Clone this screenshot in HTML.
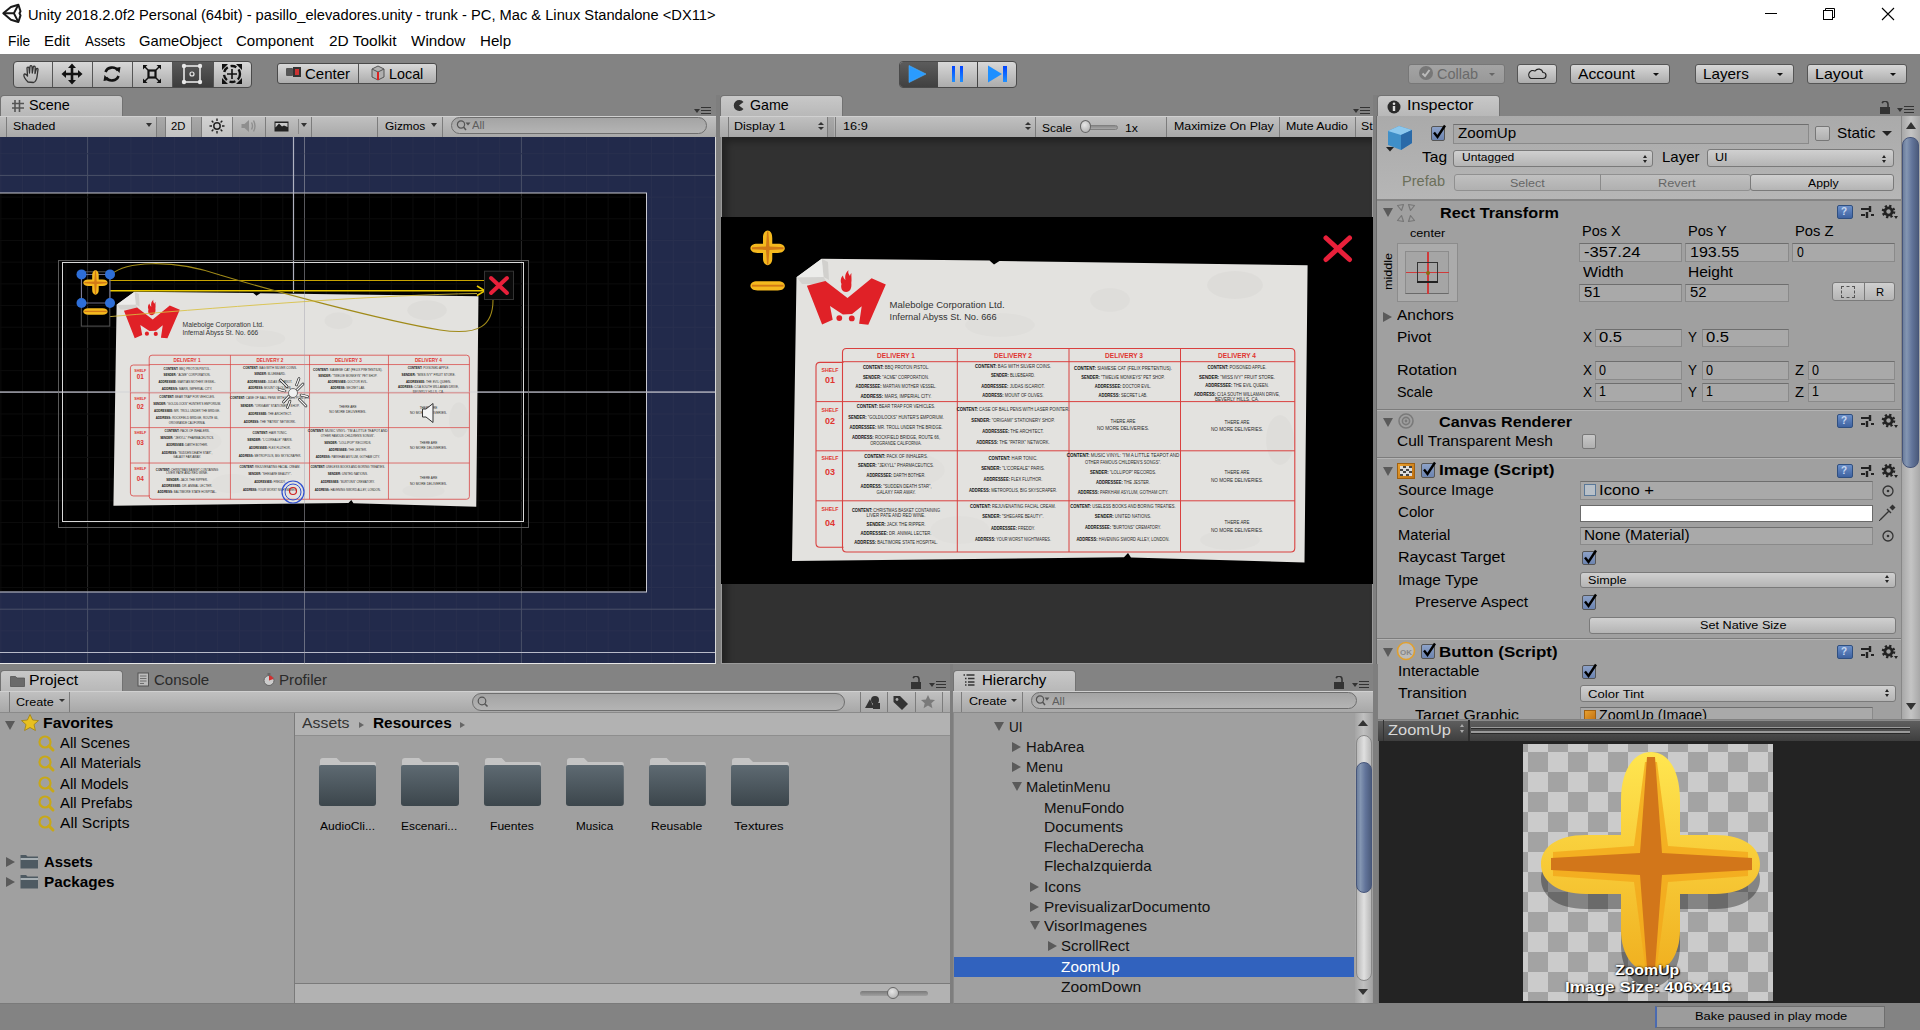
<!DOCTYPE html><html><head><meta charset="utf-8"><style>
*{margin:0;padding:0;box-sizing:border-box}
html,body{width:1920px;height:1030px;overflow:hidden;background:#838383;font-family:"Liberation Sans", sans-serif;position:relative}
.t{position:absolute;line-height:0;white-space:pre}
.ts{display:inline-block;transform-origin:0 0}
</style></head><body>
<div style="position:absolute;left:0px;top:0px;width:1920px;height:54px;background:#fff"></div>
<svg style="position:absolute;left:0px;top:0px" width="24" height="26" viewBox="0 0 24 26">
<path d="M3.3 13.3 L10.9 7 L18.4 4.7 L20.5 11.3 L19.5 13.3 L20.5 15.4 L18.4 22 L10.9 19.7 Z" fill="none" stroke="#1a1a1a" stroke-width="2" stroke-linejoin="round"/>
<path d="M3.3 13.3 H13.9 L18.2 5 M13.9 13.3 L18.2 21.7" stroke="#1a1a1a" stroke-width="1.9" fill="none"/>
</svg>
<div class="t" style="left:27.50px;top:14.60px;font-size:15.1px;font-weight:normal;color:#000;"><span class="ts" style="transform:scaleX(0.9724);">Unity 2018.2.0f2 Personal (64bit) - pasillo_elevadores.unity - trunk - PC, Mac &amp; Linux Standalone &lt;DX11&gt;</span></div>
<div style="position:absolute;left:1765px;top:13px;width:12px;height:1px;background:#000"></div>
<svg style="position:absolute;left:1820px;top:5px" width="18" height="18" viewBox="0 0 18 18">
<rect x="3.5" y="5.5" width="9" height="9" fill="none" stroke="#000" stroke-width="1"/>
<path d="M5.5 5.5 V3.5 H14.5 V12.5 H12.5" fill="none" stroke="#000" stroke-width="1"/></svg>
<svg style="position:absolute;left:1880px;top:6px" width="16" height="16" viewBox="0 0 16 16">
<path d="M2 2 L14 14 M14 2 L2 14" stroke="#000" stroke-width="1.1"/></svg>
<div class="t" style="left:7.60px;top:41.10px;font-size:14.6px;font-weight:normal;color:#000;"><span class="ts" style="transform:scaleX(0.9441);">File</span></div>
<div class="t" style="left:44.20px;top:41.10px;font-size:14.6px;font-weight:normal;color:#000;"><span class="ts" style="transform:scaleX(1.0256);">Edit</span></div>
<div class="t" style="left:84.50px;top:41.10px;font-size:14.6px;font-weight:normal;color:#000;"><span class="ts" style="transform:scaleX(0.9179);">Assets</span></div>
<div class="t" style="left:139.00px;top:41.10px;font-size:14.6px;font-weight:normal;color:#000;"><span class="ts" style="transform:scaleX(1.0132);">GameObject</span></div>
<div class="t" style="left:236.00px;top:41.10px;font-size:14.6px;font-weight:normal;color:#000;"><span class="ts" style="transform:scaleX(1.0311);">Component</span></div>
<div class="t" style="left:328.50px;top:41.10px;font-size:14.6px;font-weight:normal;color:#000;"><span class="ts" style="transform:scaleX(1.0578);">2D Toolkit</span></div>
<div class="t" style="left:410.60px;top:41.10px;font-size:14.6px;font-weight:normal;color:#000;"><span class="ts" style="transform:scaleX(1.0442);">Window</span></div>
<div class="t" style="left:479.70px;top:41.10px;font-size:14.6px;font-weight:normal;color:#000;"><span class="ts" style="transform:scaleX(1.0361);">Help</span></div>
<div style="position:absolute;left:13px;top:60.5px;width:239px;height:27px;background:linear-gradient(#d8d8d8,#acacac);border:1px solid #4a4a4a;border-radius:4px;"></div>
<div style="position:absolute;left:172px;top:61.5px;width:40.5px;height:25px;background:linear-gradient(#5a5a5a,#3c3c3c);"></div>
<div style="position:absolute;left:52px;top:61.5px;width:1px;height:25px;background:#555"></div>
<div style="position:absolute;left:92.2px;top:61.5px;width:1px;height:25px;background:#555"></div>
<div style="position:absolute;left:132.2px;top:61.5px;width:1px;height:25px;background:#555"></div>
<div style="position:absolute;left:172px;top:61.5px;width:1px;height:25px;background:#555"></div>
<div style="position:absolute;left:212.5px;top:61.5px;width:1px;height:25px;background:#555"></div>
<svg style="position:absolute;left:20px;top:63px" width="26" height="22" viewBox="0 0 26 22">
<path d="M8 19 C5 16 3.5 13 4 11.5 C4.5 10.5 6 11 7 12.5 L7.5 13 L7 5 C7 3.8 8.8 3.8 9 5 L9.5 10 L10 3.5 C10.2 2.3 12 2.3 12 3.5 L12.3 10 L13.3 4 C13.5 2.8 15.2 3 15.2 4.2 L15 10.5 L16.3 6 C16.6 5 18 5.2 18 6.3 L17 14 C16.5 17 15 19 13.5 19.5 Z" fill="none" stroke="#333" stroke-width="1.3" stroke-linejoin="round"/></svg>
<svg style="position:absolute;left:60px;top:62px" width="24" height="24" viewBox="0 0 24 24">
<path d="M12 1.5 L16 6 H13.3 V10.7 H18 V8 L22.5 12 L18 16 V13.3 H13.3 V18 H16 L12 22.5 L8 18 H10.7 V13.3 H6 V16 L1.5 12 L6 8 V10.7 H10.7 V6 H8 Z" fill="#111"/></svg>
<svg style="position:absolute;left:101px;top:63px" width="22" height="22" viewBox="0 0 22 22">
<path d="M4.5 9 A7 6.5 0 0 1 17 7.5" fill="none" stroke="#111" stroke-width="2.6"/><path d="M14 5 L19.5 4 L18.5 10 Z" fill="#111"/>
<path d="M17.5 13 A7 6.5 0 0 1 5 14.5" fill="none" stroke="#111" stroke-width="2.6"/><path d="M8 17 L2.5 18 L3.5 12 Z" fill="#111"/></svg>
<svg style="position:absolute;left:141px;top:63px" width="22" height="22" viewBox="0 0 22 22">
<rect x="7.5" y="7.5" width="7" height="7" fill="none" stroke="#111" stroke-width="2.2"/>
<path d="M2 2 L6.5 2 L2 6.5Z M20 2 L15.5 2 L20 6.5Z M2 20 L6.5 20 L2 15.5Z M20 20 L15.5 20 L20 15.5Z" fill="#111"/>
<path d="M3 3 L7 7 M19 3 L15 7 M3 19 L7 15 M19 19 L15 15" stroke="#111" stroke-width="1.5"/></svg>
<svg style="position:absolute;left:181px;top:63px" width="22" height="22" viewBox="0 0 22 22">
<rect x="3" y="3" width="16" height="16" fill="none" stroke="#e8e8e8" stroke-width="1.6"/>
<circle cx="3" cy="3" r="2.2" fill="#e8e8e8"/><circle cx="19" cy="3" r="2.2" fill="#e8e8e8"/><circle cx="3" cy="19" r="2.2" fill="#e8e8e8"/><circle cx="19" cy="19" r="2.2" fill="#e8e8e8"/>
<circle cx="11" cy="11" r="2" fill="none" stroke="#e8e8e8" stroke-width="1.2"/></svg>
<svg style="position:absolute;left:220px;top:62px" width="24" height="24" viewBox="0 0 24 24">
<path d="M2 2 H8 L2 8Z M22 2 H16 L22 8Z M2 22 H8 L2 16Z M22 22 H16 L22 16Z" fill="#111"/>
<circle cx="12" cy="12" r="8" fill="none" stroke="#111" stroke-width="2.4" stroke-dasharray="6 3"/>
<path d="M12 7 V17 M7 12 H17" stroke="#111" stroke-width="1.6"/></svg>
<div style="position:absolute;left:277px;top:63px;width:159.5px;height:21px;background:linear-gradient(#d8d8d8,#acacac);border:1px solid #4a4a4a;border-radius:3px;"></div>
<div style="position:absolute;left:357.5px;top:64px;width:1px;height:19px;background:#555"></div>
<div style="position:absolute;left:286px;top:68px;width:7px;height:8px;background:#555;border-radius:1px"></div>
<div style="position:absolute;left:293px;top:67px;width:8px;height:10px;background:#333;"></div>
<div style="position:absolute;left:295px;top:69px;width:4px;height:6px;background:#c33;"></div>
<div class="t" style="left:304.70px;top:74.60px;font-size:13.75px;font-weight:normal;color:#000;"><span class="ts" style="transform:scaleX(1.0925);">Center</span></div>
<svg style="position:absolute;left:371px;top:65px" width="14" height="16" viewBox="0 0 14 16">
<path d="M7 1 L13 4 V12 L7 15 L1 12 V4 Z" fill="#b0b0b0" stroke="#555" stroke-width="1"/>
<path d="M1 4 L7 7 L13 4 M7 7 V15" stroke="#555" stroke-width="1" fill="none"/><path d="M7 7 V15" stroke="#d22" stroke-width="2"/></svg>
<div class="t" style="left:389.30px;top:74.60px;font-size:13.75px;font-weight:normal;color:#000;"><span class="ts" style="transform:scaleX(1.0433);">Local</span></div>
<div style="position:absolute;left:899px;top:60.5px;width:118px;height:27px;background:linear-gradient(#d8d8d8,#acacac);border:1px solid #4a4a4a;border-radius:4px;"></div>
<div style="position:absolute;left:900px;top:61.5px;width:38px;height:25px;background:linear-gradient(#5c5c5c,#404040);border-radius:3px 0 0 3px"></div>
<div style="position:absolute;left:976.8px;top:61.5px;width:1px;height:25px;background:#444"></div>
<svg style="position:absolute;left:905px;top:63px" width="26" height="22" viewBox="0 0 26 22">
<path d="M4 2.5 L21 11 L4 19.5 Z" fill="#2a9bff" stroke="#4ab0ff" stroke-width="0.6"/></svg>
<div style="position:absolute;left:951.5px;top:66px;width:3.6px;height:16px;background:linear-gradient(#0042ff,#1e90ff)"></div>
<div style="position:absolute;left:959.7px;top:66px;width:3.6px;height:16px;background:linear-gradient(#0042ff,#1e90ff)"></div>
<svg style="position:absolute;left:986px;top:64px" width="24" height="20" viewBox="0 0 24 20">
<path d="M2 1.5 L16 10 L2 18.5 Z" fill="#1e8fff"/></svg>
<div style="position:absolute;left:1003px;top:66px;width:3.6px;height:16px;background:linear-gradient(#0042ff,#1e90ff)"></div>
<div style="position:absolute;left:1407.6px;top:63.5px;width:97px;height:20.5px;background:linear-gradient(#a4a4a4,#989898);border:1px solid #777;border-radius:3px;"></div>
<svg style="position:absolute;left:1418px;top:65px" width="16" height="16" viewBox="0 0 16 16"><circle cx="8" cy="8" r="7" fill="#777"/><path d="M4.5 8.5 L7 11 L11.5 5" stroke="#bbb" stroke-width="2" fill="none"/></svg>
<div class="t" style="left:1437.40px;top:74.60px;font-size:13.75px;font-weight:normal;color:#6a6a6a;"><span class="ts" style="transform:scaleX(1.0543);">Collab</span></div>
<div style="position:absolute;left:1489px;top:73px;width:0;height:0;border-left:3px solid transparent;border-right:3px solid transparent;border-top:3px solid #666"></div>
<div style="position:absolute;left:1517px;top:63.5px;width:39.5px;height:20.5px;background:linear-gradient(#d8d8d8,#acacac);border:1px solid #4a4a4a;border-radius:3px;border-color:#555"></div>
<svg style="position:absolute;left:1527px;top:67px" width="20" height="13" viewBox="0 0 20 13"><path d="M4 11.5 H16 A3 3 0 0 0 16 5.5 A4.5 4.5 0 0 0 8 4 A3.5 3.5 0 0 0 4 11.5 Z" fill="none" stroke="#222" stroke-width="1.2"/></svg>
<div style="position:absolute;left:1570px;top:63.5px;width:99.5px;height:20.5px;background:linear-gradient(#d8d8d8,#acacac);border:1px solid #4a4a4a;border-radius:3px;border-color:#555"></div>
<div class="t" style="left:1578.20px;top:74.60px;font-size:13.75px;font-weight:normal;color:#000;"><span class="ts" style="transform:scaleX(1.1431);">Account</span></div>
<div style="position:absolute;left:1652.5px;top:73px;width:0;height:0;border-left:3.5px solid transparent;border-right:3.5px solid transparent;border-top:3.5px solid #111"></div>
<div style="position:absolute;left:1695.2px;top:63.5px;width:98.79999999999995px;height:20.5px;background:linear-gradient(#d8d8d8,#acacac);border:1px solid #4a4a4a;border-radius:3px;border-color:#555"></div>
<div class="t" style="left:1702.80px;top:74.60px;font-size:13.75px;font-weight:normal;color:#000;"><span class="ts" style="transform:scaleX(1.1095);">Layers</span></div>
<div style="position:absolute;left:1777px;top:73px;width:0;height:0;border-left:3.5px solid transparent;border-right:3.5px solid transparent;border-top:3.5px solid #111"></div>
<div style="position:absolute;left:1807px;top:63.5px;width:99.5px;height:20.5px;background:linear-gradient(#d8d8d8,#acacac);border:1px solid #4a4a4a;border-radius:3px;border-color:#555"></div>
<div class="t" style="left:1815.00px;top:74.60px;font-size:13.75px;font-weight:normal;color:#000;"><span class="ts" style="transform:scaleX(1.1623);">Layout</span></div>
<div style="position:absolute;left:1889.5px;top:73px;width:0;height:0;border-left:3.5px solid transparent;border-right:3.5px solid transparent;border-top:3.5px solid #111"></div>
<div style="position:absolute;left:0px;top:95px;width:123px;height:21px;background:linear-gradient(#c8c8c8,#b8b8b8);border:1px solid #727272;border-bottom:none;border-radius:4px 4px 0 0;"></div>
<svg style="position:absolute;left:11px;top:99px" width="15" height="14" viewBox="0 0 15 14"><path d="M4 1 V13 M8.5 1 V13 M1 4.5 H13 M1 9 H13" stroke="#555" stroke-width="1.6"/></svg>
<div class="t" style="left:29.40px;top:105.60px;font-size:13.75px;font-weight:normal;color:#000;"><span class="ts" style="transform:scaleX(1.0487);">Scene</span></div>
<div style="position:absolute;left:694px;top:109px;width:0;height:0;border-left:3px solid transparent;border-right:3px solid transparent;border-top:4px solid #333"></div>
<div style="position:absolute;left:701px;top:107.0px;width:10px;height:1.3px;background:#333"></div>
<div style="position:absolute;left:701px;top:109.8px;width:10px;height:1.3px;background:#333"></div>
<div style="position:absolute;left:701px;top:112.6px;width:10px;height:1.3px;background:#333"></div>
<div style="position:absolute;left:0px;top:115.5px;width:716px;height:21px;background:linear-gradient(#c0c0c0,#a8a8a8);border-top:1px solid #d0d0d0;"></div>
<div style="position:absolute;left:6px;top:116.5px;width:1px;height:20px;background:#7c7c7c"></div>
<div style="position:absolute;left:156px;top:116.5px;width:1px;height:20px;background:#7c7c7c"></div>
<div class="t" style="left:13.30px;top:126.10px;font-size:11.25px;font-weight:normal;color:#000;"><span class="ts" style="transform:scaleX(1.0903);">Shaded</span></div>
<div style="position:absolute;left:146px;top:123px;width:0;height:0;border-left:3.5px solid transparent;border-right:3.5px solid transparent;border-top:4px solid #333"></div>
<div style="position:absolute;left:157px;top:116.5px;width:8px;height:20px;background:linear-gradient(#a9a9a9,#999)"></div>
<div style="position:absolute;left:165px;top:116.5px;width:27px;height:20px;background:linear-gradient(#d2d2d2,#c2c2c2);border-left:1px solid #7c7c7c;border-right:1px solid #7c7c7c"></div>
<div class="t" style="left:170.60px;top:126.10px;font-size:11.25px;font-weight:normal;color:#000;"><span class="ts" style="transform:scaleX(1.0007);">2D</span></div>
<div style="position:absolute;left:192px;top:116.5px;width:9px;height:20px;background:linear-gradient(#a9a9a9,#999)"></div>
<div style="position:absolute;left:201px;top:116.5px;width:32.3px;height:20px;background:linear-gradient(#d2d2d2,#c2c2c2);border-left:1px solid #7c7c7c;border-right:1px solid #7c7c7c"></div>
<svg style="position:absolute;left:209px;top:118px" width="16" height="16" viewBox="0 0 16 16"><circle cx="8" cy="8" r="3.2" fill="none" stroke="#222" stroke-width="1.5"/>
<path d="M8 0.5 V3 M8 13 V15.5 M0.5 8 H3 M13 8 H15.5 M2.7 2.7 L4.4 4.4 M11.6 11.6 L13.3 13.3 M2.7 13.3 L4.4 11.6 M11.6 4.4 L13.3 2.7" stroke="#222" stroke-width="1.4"/></svg>
<div style="position:absolute;left:265px;top:116.5px;width:1px;height:20px;background:#7c7c7c"></div>
<svg style="position:absolute;left:240px;top:118px" width="18" height="16" viewBox="0 0 18 16"><path d="M1.5 6 H4.5 L9 2 V14 L4.5 10 H1.5 Z" fill="#8e8e8e"/><path d="M11.5 4.5 Q13.5 8 11.5 11.5 M13.5 2.5 Q16.5 8 13.5 13.5" stroke="#8e8e8e" stroke-width="1.4" fill="none"/></svg>
<svg style="position:absolute;left:274px;top:121px" width="16" height="12" viewBox="0 0 16 12"><rect x="0.5" y="0.5" width="14" height="10" fill="#222"/><path d="M1.5 9.5 V7 L5 3 L8 6 L10 5 L13.5 3 V9.5 Z" fill="#222"/><path d="M1.5 2 H13.5 V6 L10 4.5 L8 5.5 L5 2.5 L1.5 6.5 Z" fill="#c8c8c8"/></svg>
<div style="position:absolute;left:297.5px;top:119px;width:1px;height:15px;background:#8a8a8a"></div>
<div style="position:absolute;left:300.5px;top:123px;width:0;height:0;border-left:3.5px solid transparent;border-right:3.5px solid transparent;border-top:4px solid #333"></div>
<div style="position:absolute;left:311px;top:116.5px;width:1px;height:20px;background:#7c7c7c"></div>
<div style="position:absolute;left:376.6px;top:116.5px;width:1px;height:20px;background:#7c7c7c"></div>
<div class="t" style="left:384.70px;top:126.10px;font-size:11.25px;font-weight:normal;color:#000;"><span class="ts" style="transform:scaleX(1.0566);">Gizmos</span></div>
<div style="position:absolute;left:431px;top:123px;width:0;height:0;border-left:3.5px solid transparent;border-right:3.5px solid transparent;border-top:4px solid #333"></div>
<div style="position:absolute;left:441.5px;top:116.5px;width:1px;height:20px;background:#7c7c7c"></div>
<div style="position:absolute;left:451px;top:117px;width:255.5px;height:16.5px;background:linear-gradient(#a4a4a4,#b4b4b4);border:1px solid #6e6e6e;border-radius:9px;"></div>
<svg style="position:absolute;left:456px;top:119px" width="16" height="13" viewBox="0 0 16 13"><circle cx="5" cy="5.5" r="3.6" fill="none" stroke="#555" stroke-width="1.2"/><path d="M7.5 8 L10 11" stroke="#555" stroke-width="1.5"/><path d="M9.5 3.5 H14.5 L12 6.5 Z" fill="#555"/></svg>
<div class="t" style="left:471.80px;top:125.10px;font-size:11.25px;font-weight:normal;color:#5e5e5e;"><span class="ts" style="transform:scaleX(0.9988);">All</span></div>
<svg style="position:absolute;left:0;top:137px" width="716" height="527" viewBox="0 0 716 527"><rect x="0" y="0" width="716" height="527" fill="#222a4b"/><rect x="0.34" y="0" width="1" height="527" fill="#29304f"/><rect x="22.03" y="0" width="1" height="527" fill="#29304f"/><rect x="43.72" y="0" width="1" height="527" fill="#29304f"/><rect x="65.41" y="0" width="1" height="527" fill="#29304f"/><rect x="87.10" y="0" width="1" height="527" fill="#4a5068"/><rect x="108.79" y="0" width="1" height="527" fill="#29304f"/><rect x="130.48" y="0" width="1" height="527" fill="#29304f"/><rect x="152.17" y="0" width="1" height="527" fill="#29304f"/><rect x="173.86" y="0" width="1" height="527" fill="#29304f"/><rect x="195.55" y="0" width="1" height="527" fill="#29304f"/><rect x="217.24" y="0" width="1" height="527" fill="#29304f"/><rect x="238.93" y="0" width="1" height="527" fill="#29304f"/><rect x="260.62" y="0" width="1" height="527" fill="#29304f"/><rect x="282.31" y="0" width="1" height="527" fill="#29304f"/><rect x="304.00" y="0" width="1" height="527" fill="#4a5068"/><rect x="325.69" y="0" width="1" height="527" fill="#29304f"/><rect x="347.38" y="0" width="1" height="527" fill="#29304f"/><rect x="369.07" y="0" width="1" height="527" fill="#29304f"/><rect x="390.76" y="0" width="1" height="527" fill="#29304f"/><rect x="412.45" y="0" width="1" height="527" fill="#29304f"/><rect x="434.14" y="0" width="1" height="527" fill="#29304f"/><rect x="455.83" y="0" width="1" height="527" fill="#29304f"/><rect x="477.52" y="0" width="1" height="527" fill="#29304f"/><rect x="499.21" y="0" width="1" height="527" fill="#29304f"/><rect x="520.90" y="0" width="1" height="527" fill="#4a5068"/><rect x="542.59" y="0" width="1" height="527" fill="#29304f"/><rect x="564.28" y="0" width="1" height="527" fill="#29304f"/><rect x="585.97" y="0" width="1" height="527" fill="#29304f"/><rect x="607.66" y="0" width="1" height="527" fill="#29304f"/><rect x="629.35" y="0" width="1" height="527" fill="#29304f"/><rect x="651.04" y="0" width="1" height="527" fill="#29304f"/><rect x="672.73" y="0" width="1" height="527" fill="#29304f"/><rect x="694.42" y="0" width="1" height="527" fill="#29304f"/><rect x="0" y="16.21" width="716" height="1" fill="#29304f"/><rect x="0" y="37.90" width="716" height="1" fill="#4a5068"/><rect x="0" y="59.59" width="716" height="1" fill="#29304f"/><rect x="0" y="81.28" width="716" height="1" fill="#29304f"/><rect x="0" y="102.97" width="716" height="1" fill="#29304f"/><rect x="0" y="124.66" width="716" height="1" fill="#29304f"/><rect x="0" y="146.35" width="716" height="1" fill="#29304f"/><rect x="0" y="168.04" width="716" height="1" fill="#29304f"/><rect x="0" y="189.73" width="716" height="1" fill="#29304f"/><rect x="0" y="211.42" width="716" height="1" fill="#29304f"/><rect x="0" y="233.11" width="716" height="1" fill="#29304f"/><rect x="0" y="254.80" width="716" height="1" fill="#4a5068"/><rect x="0" y="276.49" width="716" height="1" fill="#29304f"/><rect x="0" y="298.18" width="716" height="1" fill="#29304f"/><rect x="0" y="319.87" width="716" height="1" fill="#29304f"/><rect x="0" y="341.56" width="716" height="1" fill="#29304f"/><rect x="0" y="363.25" width="716" height="1" fill="#29304f"/><rect x="0" y="384.94" width="716" height="1" fill="#29304f"/><rect x="0" y="406.63" width="716" height="1" fill="#29304f"/><rect x="0" y="428.32" width="716" height="1" fill="#29304f"/><rect x="0" y="450.01" width="716" height="1" fill="#29304f"/><rect x="0" y="471.70" width="716" height="1" fill="#4a5068"/><rect x="0" y="493.39" width="716" height="1" fill="#29304f"/><rect x="0" y="515.08" width="716" height="1" fill="#29304f"/><rect x="0" y="56" width="646.5" height="398.5" fill="#000"/><rect x="0.34" y="56.5" width="1" height="398" fill="#0c0c0c"/><rect x="22.03" y="56.5" width="1" height="398" fill="#0c0c0c"/><rect x="43.72" y="56.5" width="1" height="398" fill="#0c0c0c"/><rect x="65.41" y="56.5" width="1" height="398" fill="#0c0c0c"/><rect x="87.10" y="56.5" width="1" height="398" fill="#2c2c2c"/><rect x="108.79" y="56.5" width="1" height="398" fill="#0c0c0c"/><rect x="130.48" y="56.5" width="1" height="398" fill="#0c0c0c"/><rect x="152.17" y="56.5" width="1" height="398" fill="#0c0c0c"/><rect x="173.86" y="56.5" width="1" height="398" fill="#0c0c0c"/><rect x="195.55" y="56.5" width="1" height="398" fill="#0c0c0c"/><rect x="217.24" y="56.5" width="1" height="398" fill="#0c0c0c"/><rect x="238.93" y="56.5" width="1" height="398" fill="#0c0c0c"/><rect x="260.62" y="56.5" width="1" height="398" fill="#0c0c0c"/><rect x="282.31" y="56.5" width="1" height="398" fill="#0c0c0c"/><rect x="304.00" y="56.5" width="1" height="398" fill="#2c2c2c"/><rect x="325.69" y="56.5" width="1" height="398" fill="#0c0c0c"/><rect x="347.38" y="56.5" width="1" height="398" fill="#0c0c0c"/><rect x="369.07" y="56.5" width="1" height="398" fill="#0c0c0c"/><rect x="390.76" y="56.5" width="1" height="398" fill="#0c0c0c"/><rect x="412.45" y="56.5" width="1" height="398" fill="#0c0c0c"/><rect x="434.14" y="56.5" width="1" height="398" fill="#0c0c0c"/><rect x="455.83" y="56.5" width="1" height="398" fill="#0c0c0c"/><rect x="477.52" y="56.5" width="1" height="398" fill="#0c0c0c"/><rect x="499.21" y="56.5" width="1" height="398" fill="#0c0c0c"/><rect x="520.90" y="56.5" width="1" height="398" fill="#2c2c2c"/><rect x="542.59" y="56.5" width="1" height="398" fill="#0c0c0c"/><rect x="564.28" y="56.5" width="1" height="398" fill="#0c0c0c"/><rect x="585.97" y="56.5" width="1" height="398" fill="#0c0c0c"/><rect x="607.66" y="56.5" width="1" height="398" fill="#0c0c0c"/><rect x="629.35" y="56.5" width="1" height="398" fill="#0c0c0c"/><rect x="0" y="59.59" width="646" height="1" fill="#0c0c0c"/><rect x="0" y="81.28" width="646" height="1" fill="#0c0c0c"/><rect x="0" y="102.97" width="646" height="1" fill="#0c0c0c"/><rect x="0" y="124.66" width="646" height="1" fill="#0c0c0c"/><rect x="0" y="146.35" width="646" height="1" fill="#0c0c0c"/><rect x="0" y="168.04" width="646" height="1" fill="#0c0c0c"/><rect x="0" y="189.73" width="646" height="1" fill="#0c0c0c"/><rect x="0" y="211.42" width="646" height="1" fill="#0c0c0c"/><rect x="0" y="233.11" width="646" height="1" fill="#0c0c0c"/><rect x="0" y="254.80" width="646" height="1" fill="#2c2c2c"/><rect x="0" y="276.49" width="646" height="1" fill="#0c0c0c"/><rect x="0" y="298.18" width="646" height="1" fill="#0c0c0c"/><rect x="0" y="319.87" width="646" height="1" fill="#0c0c0c"/><rect x="0" y="341.56" width="646" height="1" fill="#0c0c0c"/><rect x="0" y="363.25" width="646" height="1" fill="#0c0c0c"/><rect x="0" y="384.94" width="646" height="1" fill="#0c0c0c"/><rect x="0" y="406.63" width="646" height="1" fill="#0c0c0c"/><rect x="0" y="428.32" width="646" height="1" fill="#0c0c0c"/><rect x="0" y="450.01" width="646" height="1" fill="#0c0c0c"/><rect x="-1" y="56" width="647.5" height="399" fill="none" stroke="#c8c8d0" stroke-width="1"/><rect x="292.9" y="0" width="1.2" height="156" fill="#b8bac8" opacity="0.95"/><rect x="0" y="254.5" width="716" height="1.2" fill="#a8aab8" opacity="0.9"/></svg>
<div style="position:absolute;left:715px;top:137px;width:1px;height:527px;background:#d8d8d8"></div>
<div style="position:absolute;left:0px;top:663px;width:716px;height:1px;background:#e8e8e8"></div>
<div style="position:absolute;left:0px;top:652px;width:715px;height:1px;background:#b8bac8"></div>
<div style="position:absolute;left:57.6px;top:260.3px;width:471.4px;height:268px;border:1px solid #5a5a5a"></div>
<div style="position:absolute;left:62.2px;top:262.2px;width:462.2px;height:260.2px;border:1px solid #d8d8d8"></div>
<svg style="position:absolute;left:111.68px;top:289.41px;" width="368.16" height="219.48" viewBox="790 255 520 310" font-family="Liberation Sans, sans-serif"><path d="M796.5 277.3 L821.7 258.8 L989.5 260.6 L994 264.5 L999.5 261 L1307.6 265.3 L1304.5 562.4 L1131 557.5 L1128 553 L1124 557.3 L792 561 Z" fill="#e3e2df"/>
<ellipse cx="1235" cy="285" rx="28" ry="14" fill="#000" opacity="0.025"/>
<ellipse cx="1000" cy="325" rx="35" ry="12" fill="#000" opacity="0.015"/>
<ellipse cx="1280" cy="440" rx="14" ry="25" fill="#000" opacity="0.02"/>
<ellipse cx="1230" cy="540" rx="30" ry="10" fill="#000" opacity="0.015"/>
<ellipse cx="905" cy="470" rx="40" ry="18" fill="#000" opacity="0.012"/>
<ellipse cx="1110" cy="300" rx="20" ry="12" fill="#000" opacity="0.02"/>
<ellipse cx="960" cy="530" rx="30" ry="14" fill="#000" opacity="0.012"/>
<path d="M796.5 277.3 L823.5 277 L828 284 L802 284 Z" fill="#000" opacity="0.07"/>
<path d="M823.5 277 L821.7 258.8 L828 262 L829 280 Z" fill="#000" opacity="0.08"/>
<path d="M796.5 277.3 L821.7 258.8 L823.5 277 Z" fill="#ececea"/>
<path d="M806.9 285.8 L825.4 281.1 L847.5 298 L871.6 278.2 L885.8 284.4 L868.3 324.7 L859.1 323.7 L861.7 306.2 L852.1 314.1 L842.9 314.5 L830 305.9 L832.7 319.8 L822.1 324.4 Z" fill="#e02127"/>
<path d="M846.2 292 C841.5 292 840.5 287 841.5 284 C840 281 841 277 843 275.5 C843 278 844.5 279 845.5 280 C844.5 276 846 272 848.5 270.3 C847.5 273 849 274.5 850 276 C850.2 274.5 851 273.5 851.5 273.3 C851 276 852 279 851.3 283 C852 288 850 292 846.2 292 Z" fill="#e02127"/>
<circle cx="839.3" cy="318.1" r="2.9" fill="#e02127"/><circle cx="851.8" cy="318.4" r="2.9" fill="#e02127"/>
<text x="889.6" y="308.3" font-size="9.6" fill="#333" textLength="115" lengthAdjust="spacingAndGlyphs">Malebolge Corporation Ltd.</text>
<text x="889.6" y="320.4" font-size="9.6" fill="#333" textLength="107" lengthAdjust="spacingAndGlyphs">Infernal Abyss St.  No. 666</text>
<path d="M846.5 348.5 H1290.8 Q1294.8 348.5 1294.8 352.5 V548 Q1294.8 552 1290.8 552 H846.5 Q842.5 552 842.5 548 V352.5 Q842.5 348.5 846.5 348.5 Z" fill="none" stroke="#d9403f" stroke-width="1.1"/>
<path d="M843.5 362.4 H820 Q816 362.4 816 366.4 V543.3 Q816 547.3 820 547.3 H843.5" fill="none" stroke="#d9403f" stroke-width="1.1"/>
<path d="M842.5 361.7 H1294.8 M816 401.6 H1294.8 M816 450.8 H1294.8 M816 500.8 H1294.8 M957.3 348.5 V552 M1069 348.5 V552 M1180.5 348.5 V552" stroke="#d9403f" stroke-width="1" fill="none"/>
<text x="896" y="358.4" font-size="7.4" font-weight="bold" fill="#e0342f" text-anchor="middle" textLength="38" lengthAdjust="spacingAndGlyphs">DELIVERY 1</text>
<text x="1013" y="358.4" font-size="7.4" font-weight="bold" fill="#e0342f" text-anchor="middle" textLength="38" lengthAdjust="spacingAndGlyphs">DELIVERY 2</text>
<text x="1124" y="358.4" font-size="7.4" font-weight="bold" fill="#e0342f" text-anchor="middle" textLength="38" lengthAdjust="spacingAndGlyphs">DELIVERY 3</text>
<text x="1237" y="358.4" font-size="7.4" font-weight="bold" fill="#e0342f" text-anchor="middle" textLength="38" lengthAdjust="spacingAndGlyphs">DELIVERY 4</text>
<text x="830" y="371.6" font-size="5.2" font-weight="bold" fill="#e0342f" text-anchor="middle">SHELF</text>
<text x="830" y="382.7" font-size="9" font-weight="bold" fill="#e0342f" text-anchor="middle">01</text>
<text x="830" y="411.6" font-size="5.2" font-weight="bold" fill="#e0342f" text-anchor="middle">SHELF</text>
<text x="830" y="423.8" font-size="9" font-weight="bold" fill="#e0342f" text-anchor="middle">02</text>
<text x="830" y="459.7" font-size="5.2" font-weight="bold" fill="#e0342f" text-anchor="middle">SHELF</text>
<text x="830" y="475" font-size="9" font-weight="bold" fill="#e0342f" text-anchor="middle">03</text>
<text x="830" y="511" font-size="5.2" font-weight="bold" fill="#e0342f" text-anchor="middle">SHELF</text>
<text x="830" y="525.9" font-size="9" font-weight="bold" fill="#e0342f" text-anchor="middle">04</text>
<text x="896" y="368.8" font-size="4.6" fill="#2a2a2a" text-anchor="middle" textLength="66.2" lengthAdjust="spacingAndGlyphs"><tspan font-weight="bold" fill="#111">CONTENT:</tspan> BBQ PROTON PISTOL.</text>
<text x="896" y="378.5" font-size="4.6" fill="#2a2a2a" text-anchor="middle" textLength="66.2" lengthAdjust="spacingAndGlyphs"><tspan font-weight="bold" fill="#111">SENDER:</tspan> &quot;ACME&quot; CORPORATION.</text>
<text x="896" y="388" font-size="4.6" fill="#2a2a2a" text-anchor="middle" textLength="80.9" lengthAdjust="spacingAndGlyphs"><tspan font-weight="bold" fill="#111">ADDRESSEE:</tspan> MARTIAN MOTHER VESSEL.</text>
<text x="896" y="397.7" font-size="4.6" fill="#2a2a2a" text-anchor="middle" textLength="71.1" lengthAdjust="spacingAndGlyphs"><tspan font-weight="bold" fill="#111">ADDRESS:</tspan> MARS, IMPERIAL CITY.</text>
<text x="896" y="408.4" font-size="4.6" fill="#2a2a2a" text-anchor="middle" textLength="78.4" lengthAdjust="spacingAndGlyphs"><tspan font-weight="bold" fill="#111">CONTENT:</tspan> BEAR TRAP FOR VEHICLES.</text>
<text x="896" y="418.7" font-size="4.6" fill="#2a2a2a" text-anchor="middle" textLength="95.6" lengthAdjust="spacingAndGlyphs"><tspan font-weight="bold" fill="#111">SENDER:</tspan> &quot;GOLDILOCKS&quot; HUNTER'S EMPORIUM.</text>
<text x="896" y="429.2" font-size="4.6" fill="#2a2a2a" text-anchor="middle" textLength="93.1" lengthAdjust="spacingAndGlyphs"><tspan font-weight="bold" fill="#111">ADDRESSEE:</tspan> MR. TROLL UNDER THE BRIDGE.</text>
<text x="896" y="439" font-size="4.6" fill="#2a2a2a" text-anchor="middle" textLength="88.2" lengthAdjust="spacingAndGlyphs"><tspan font-weight="bold" fill="#111">ADDRESS:</tspan> ROCKFIELD BRIDGE, ROUTE 66,</text>
<text x="896" y="445.4" font-size="4.6" fill="#2a2a2a" text-anchor="middle" textLength="51.5" lengthAdjust="spacingAndGlyphs">OROGRANDE CALIFORNIA.</text>
<text x="896" y="457.5" font-size="4.6" fill="#2a2a2a" text-anchor="middle" textLength="63.7" lengthAdjust="spacingAndGlyphs"><tspan font-weight="bold" fill="#111">CONTENT:</tspan> PACK OF INHALERS.</text>
<text x="896" y="467" font-size="4.6" fill="#2a2a2a" text-anchor="middle" textLength="76.0" lengthAdjust="spacingAndGlyphs"><tspan font-weight="bold" fill="#111">SENDER:</tspan> &quot;JEKYLL&quot; PHARMACEUTICS.</text>
<text x="896" y="476.5" font-size="4.6" fill="#2a2a2a" text-anchor="middle" textLength="58.8" lengthAdjust="spacingAndGlyphs"><tspan font-weight="bold" fill="#111">ADDRESSEE:</tspan> DARTH BOTHER.</text>
<text x="896" y="487.5" font-size="4.6" fill="#2a2a2a" text-anchor="middle" textLength="71.1" lengthAdjust="spacingAndGlyphs"><tspan font-weight="bold" fill="#111">ADDRESS:</tspan> &quot;SUDDEN DEATH STAR&quot;,</text>
<text x="896" y="494" font-size="4.6" fill="#2a2a2a" text-anchor="middle" textLength="39.2" lengthAdjust="spacingAndGlyphs">GALAXY FAR AWAY.</text>
<text x="896" y="511.5" font-size="4.6" fill="#2a2a2a" text-anchor="middle" textLength="88.2" lengthAdjust="spacingAndGlyphs"><tspan font-weight="bold" fill="#111">CONTENT:</tspan> CHRISTMAS BASKET CONTAINING</text>
<text x="896" y="516.5" font-size="4.6" fill="#2a2a2a" text-anchor="middle" textLength="58.8" lengthAdjust="spacingAndGlyphs">LIVER PATE AND RED WINE.</text>
<text x="896" y="525.5" font-size="4.6" fill="#2a2a2a" text-anchor="middle" textLength="58.8" lengthAdjust="spacingAndGlyphs"><tspan font-weight="bold" fill="#111">SENDER:</tspan> JACK THE RIPPER.</text>
<text x="896" y="534.5" font-size="4.6" fill="#2a2a2a" text-anchor="middle" textLength="71.1" lengthAdjust="spacingAndGlyphs"><tspan font-weight="bold" fill="#111">ADDRESSEE:</tspan> DR. ANIMAL LECTER.</text>
<text x="896" y="543.5" font-size="4.6" fill="#2a2a2a" text-anchor="middle" textLength="83.3" lengthAdjust="spacingAndGlyphs"><tspan font-weight="bold" fill="#111">ADDRESS:</tspan> BALTIMORE STATE HOSPITAL.</text>
<text x="1013" y="367.5" font-size="4.6" fill="#2a2a2a" text-anchor="middle" textLength="76.0" lengthAdjust="spacingAndGlyphs"><tspan font-weight="bold" fill="#111">CONTENT:</tspan> BAG WITH SILVER COINS.</text>
<text x="1013" y="377" font-size="4.6" fill="#2a2a2a" text-anchor="middle" textLength="44.1" lengthAdjust="spacingAndGlyphs"><tspan font-weight="bold" fill="#111">SENDER:</tspan> BLUEBEARD.</text>
<text x="1013" y="387.5" font-size="4.6" fill="#2a2a2a" text-anchor="middle" textLength="63.7" lengthAdjust="spacingAndGlyphs"><tspan font-weight="bold" fill="#111">ADDRESSEE:</tspan> JUDAS ISCARIOT.</text>
<text x="1013" y="396.5" font-size="4.6" fill="#2a2a2a" text-anchor="middle" textLength="61.3" lengthAdjust="spacingAndGlyphs"><tspan font-weight="bold" fill="#111">ADDRESS:</tspan> MOUNT OF OLIVES.</text>
<text x="1013" y="411" font-size="4.6" fill="#2a2a2a" text-anchor="middle" textLength="112.7" lengthAdjust="spacingAndGlyphs"><tspan font-weight="bold" fill="#111">CONTENT:</tspan> CASE OF BALL PENS WITH LASER POINTER.</text>
<text x="1013" y="422" font-size="4.6" fill="#2a2a2a" text-anchor="middle" textLength="83.3" lengthAdjust="spacingAndGlyphs"><tspan font-weight="bold" fill="#111">SENDER:</tspan> &quot;ORIGAMI&quot; STATIONERY SHOP.</text>
<text x="1013" y="433" font-size="4.6" fill="#2a2a2a" text-anchor="middle" textLength="61.3" lengthAdjust="spacingAndGlyphs"><tspan font-weight="bold" fill="#111">ADDRESSEE:</tspan> THE ARCHITECT.</text>
<text x="1013" y="444" font-size="4.6" fill="#2a2a2a" text-anchor="middle" textLength="73.5" lengthAdjust="spacingAndGlyphs"><tspan font-weight="bold" fill="#111">ADDRESS:</tspan> THE &quot;PATRIX&quot; NETWORK.</text>
<text x="1013" y="459.5" font-size="4.6" fill="#2a2a2a" text-anchor="middle" textLength="49.0" lengthAdjust="spacingAndGlyphs"><tspan font-weight="bold" fill="#111">CONTENT:</tspan> HAIR TONIC.</text>
<text x="1013" y="470" font-size="4.6" fill="#2a2a2a" text-anchor="middle" textLength="63.7" lengthAdjust="spacingAndGlyphs"><tspan font-weight="bold" fill="#111">SENDER:</tspan> &quot;L'COREALE&quot; PARIS.</text>
<text x="1013" y="481" font-size="4.6" fill="#2a2a2a" text-anchor="middle" textLength="58.8" lengthAdjust="spacingAndGlyphs"><tspan font-weight="bold" fill="#111">ADDRESSEE:</tspan> FLEX FLUTHOR.</text>
<text x="1013" y="492" font-size="4.6" fill="#2a2a2a" text-anchor="middle" textLength="88.2" lengthAdjust="spacingAndGlyphs"><tspan font-weight="bold" fill="#111">ADDRESS:</tspan> METROPOLIS, BIG SKYSCRAPER.</text>
<text x="1013" y="508" font-size="4.6" fill="#2a2a2a" text-anchor="middle" textLength="85.8" lengthAdjust="spacingAndGlyphs"><tspan font-weight="bold" fill="#111">CONTENT:</tspan> REJUVENATING FACIAL CREAM.</text>
<text x="1013" y="518" font-size="4.6" fill="#2a2a2a" text-anchor="middle" textLength="61.3" lengthAdjust="spacingAndGlyphs"><tspan font-weight="bold" fill="#111">SENDER:</tspan> &quot;SHEGARE BEAUTY&quot;.</text>
<text x="1013" y="529.5" font-size="4.6" fill="#2a2a2a" text-anchor="middle" textLength="44.1" lengthAdjust="spacingAndGlyphs"><tspan font-weight="bold" fill="#111">ADDRESSEE:</tspan> FREDDY.</text>
<text x="1013" y="541" font-size="4.6" fill="#2a2a2a" text-anchor="middle" textLength="76.0" lengthAdjust="spacingAndGlyphs"><tspan font-weight="bold" fill="#111">ADDRESS:</tspan> YOUR WORST NIGHTMARES.</text>
<text x="1123" y="370.2" font-size="4.6" fill="#2a2a2a" text-anchor="middle" textLength="98.0" lengthAdjust="spacingAndGlyphs"><tspan font-weight="bold" fill="#111">CONTENT:</tspan> SIAMESE CAT (FELIX PRETENTIUS).</text>
<text x="1123" y="379.3" font-size="4.6" fill="#2a2a2a" text-anchor="middle" textLength="83.3" lengthAdjust="spacingAndGlyphs"><tspan font-weight="bold" fill="#111">SENDER:</tspan> &quot;TWELVE MONKEYS&quot; PET SHOP.</text>
<text x="1123" y="388" font-size="4.6" fill="#2a2a2a" text-anchor="middle" textLength="56.4" lengthAdjust="spacingAndGlyphs"><tspan font-weight="bold" fill="#111">ADDRESSEE:</tspan> DOCTOR EVIL.</text>
<text x="1123" y="396.6" font-size="4.6" fill="#2a2a2a" text-anchor="middle" textLength="49.0" lengthAdjust="spacingAndGlyphs"><tspan font-weight="bold" fill="#111">ADDRESS:</tspan> SECRET LAB.</text>
<text x="1123" y="423.3" font-size="5.2" fill="#2a2a2a" text-anchor="middle" textLength="24.8" lengthAdjust="spacingAndGlyphs">THERE ARE</text>
<text x="1123" y="430.3" font-size="5.2" fill="#2a2a2a" text-anchor="middle" textLength="52.2" lengthAdjust="spacingAndGlyphs">NO MORE DELIVERIES.</text>
<text x="1123" y="457" font-size="4.6" fill="#2a2a2a" text-anchor="middle" textLength="112.7" lengthAdjust="spacingAndGlyphs"><tspan font-weight="bold" fill="#111">CONTENT:</tspan> MUSIC VINYL: &quot;I'M A LITTLE TEAPOT AND</text>
<text x="1123" y="463.5" font-size="4.6" fill="#2a2a2a" text-anchor="middle" textLength="76.0" lengthAdjust="spacingAndGlyphs">OTHER FAMOUS CHILDREN'S SONGS&quot;.</text>
<text x="1123" y="473.5" font-size="4.6" fill="#2a2a2a" text-anchor="middle" textLength="66.2" lengthAdjust="spacingAndGlyphs"><tspan font-weight="bold" fill="#111">SENDER:</tspan> &quot;LOLLIPOP&quot; RECORDS.</text>
<text x="1123" y="483.5" font-size="4.6" fill="#2a2a2a" text-anchor="middle" textLength="53.9" lengthAdjust="spacingAndGlyphs"><tspan font-weight="bold" fill="#111">ADDRESSEE:</tspan> THE JESTER.</text>
<text x="1123" y="494" font-size="4.6" fill="#2a2a2a" text-anchor="middle" textLength="90.7" lengthAdjust="spacingAndGlyphs"><tspan font-weight="bold" fill="#111">ADDRESS:</tspan> PARKHAM ASYLUM, GOTHAM CITY.</text>
<text x="1123" y="507.5" font-size="4.6" fill="#2a2a2a" text-anchor="middle" textLength="105.4" lengthAdjust="spacingAndGlyphs"><tspan font-weight="bold" fill="#111">CONTENT:</tspan> USELESS BOOKS AND BORING TREATIES.</text>
<text x="1123" y="517.5" font-size="4.6" fill="#2a2a2a" text-anchor="middle" textLength="56.4" lengthAdjust="spacingAndGlyphs"><tspan font-weight="bold" fill="#111">SENDER:</tspan> UNITED NATIONS.</text>
<text x="1123" y="528.5" font-size="4.6" fill="#2a2a2a" text-anchor="middle" textLength="76.0" lengthAdjust="spacingAndGlyphs"><tspan font-weight="bold" fill="#111">ADDRESSEE:</tspan> &quot;BURTONS&quot; CREMATORY.</text>
<text x="1123" y="541" font-size="4.6" fill="#2a2a2a" text-anchor="middle" textLength="93.1" lengthAdjust="spacingAndGlyphs"><tspan font-weight="bold" fill="#111">ADDRESS:</tspan> HAVENING SWORD ALLEY, LONDON.</text>
<text x="1237" y="368.5" font-size="4.6" fill="#2a2a2a" text-anchor="middle" textLength="58.8" lengthAdjust="spacingAndGlyphs"><tspan font-weight="bold" fill="#111">CONTENT:</tspan> POISONED APPLE.</text>
<text x="1237" y="378.5" font-size="4.6" fill="#2a2a2a" text-anchor="middle" textLength="76.0" lengthAdjust="spacingAndGlyphs"><tspan font-weight="bold" fill="#111">SENDER:</tspan> &quot;MISS IVY&quot; FRUIT STORE.</text>
<text x="1237" y="387.3" font-size="4.6" fill="#2a2a2a" text-anchor="middle" textLength="63.7" lengthAdjust="spacingAndGlyphs"><tspan font-weight="bold" fill="#111">ADDRESSEE:</tspan> THE EVIL QUEEN.</text>
<text x="1237" y="395.5" font-size="4.6" fill="#2a2a2a" text-anchor="middle" textLength="85.8" lengthAdjust="spacingAndGlyphs"><tspan font-weight="bold" fill="#111">ADDRESS:</tspan> C/1A SOUTH WILLAMAN DRIVE,</text>
<text x="1237" y="401.2" font-size="4.6" fill="#2a2a2a" text-anchor="middle" textLength="44.1" lengthAdjust="spacingAndGlyphs">BEVERLY HILLS, CA.</text>
<text x="1237" y="424" font-size="5.2" fill="#2a2a2a" text-anchor="middle" textLength="24.8" lengthAdjust="spacingAndGlyphs">THERE ARE</text>
<text x="1237" y="431" font-size="5.2" fill="#2a2a2a" text-anchor="middle" textLength="52.2" lengthAdjust="spacingAndGlyphs">NO MORE DELIVERIES.</text>
<text x="1237" y="473.5" font-size="5.2" fill="#2a2a2a" text-anchor="middle" textLength="24.8" lengthAdjust="spacingAndGlyphs">THERE ARE</text>
<text x="1237" y="481.5" font-size="5.2" fill="#2a2a2a" text-anchor="middle" textLength="52.2" lengthAdjust="spacingAndGlyphs">NO MORE DELIVERIES.</text>
<text x="1237" y="524" font-size="5.2" fill="#2a2a2a" text-anchor="middle" textLength="24.8" lengthAdjust="spacingAndGlyphs">THERE ARE</text>
<text x="1237" y="532" font-size="5.2" fill="#2a2a2a" text-anchor="middle" textLength="52.2" lengthAdjust="spacingAndGlyphs">NO MORE DELIVERIES.</text></svg>
<svg style="position:absolute;left:0;top:137px" width="716" height="527" viewBox="0 137 716 527">
<path d="M109 280.5 H484" stroke="#c8a400" stroke-width="1.2"/>
<path d="M110 290.8 H484" stroke="#e8c800" stroke-width="1.6"/><path d="M477 286 L485 290.8 L477 295.5" stroke="#e8c800" stroke-width="1.5" fill="none"/>
<path d="M111 274.5 C 125 262, 170 258, 220 275 C 270 290, 380 320, 440 330 C 480 336, 493 325, 493 300" stroke="#a08a18" stroke-width="1.1" fill="none"/>
<path d="M110 316.6 C 250 305, 380 295, 477 293.5" stroke="#d8c040" stroke-width="1" fill="none" opacity="0.85"/>
<rect x="304" y="137" width="1" height="527" fill="#9a9aa8" opacity="0.4"/>
<rect x="0" y="391.5" width="716" height="1" fill="#c8c8d0" opacity="0.55"/>
<rect x="81.3" y="271.8" width="28.5" height="54.3" fill="none" stroke="#555" stroke-width="1"/>
<rect x="81.5" y="274.4" width="28.5" height="28.6" fill="none" stroke="#8888aa" stroke-width="0.8"/>
<circle cx="81.5" cy="274.4" r="5" fill="#2e6fd8"/><circle cx="110" cy="274.4" r="5" fill="#2e6fd8"/><circle cx="81.5" cy="303" r="5" fill="#2e6fd8"/><circle cx="110" cy="303" r="5" fill="#2e6fd8"/>
<g transform="translate(95.5,282.7) scale(0.111)"><path d="M0 -112 C17 -112 29 -94 29 -64 V-29 H64 C94 -29 109 -16 109 0 C109 16 94 30 64 30 H29 V66 C29 91 17 108 0 108 C-17 108 -30 91 -30 66 V30 H-65 C-95 30 -110 16 -110 0 C-110 -16 -95 -29 -65 -29 H-30 V-64 C-30 -94 -17 -112 0 -112 Z" fill="#f5b91e"/><path d="M-4 -107 H4 L11 -11 L101 -6 V6 L11 11 L4 104 H-4 L-11 11 L-100 6 V-6 L-11 -11 Z" fill="#d27a16"/></g><g transform="translate(95.5,311.4) scale(0.111,0.111)"><path d="M-110 0 C-110 -16 -95 -29 -65 -29 H64 C94 -29 109 -16 109 0 C109 16 94 30 64 30 H-65 C-95 30 -110 16 -110 0 Z" fill="#f5b91e"/><path d="M-100 -6 H101 V6 H-100 Z" fill="#d27a16"/></g>
<rect x="484.5" y="271.2" width="29" height="28.3" fill="#0a0a0a" stroke="#333" stroke-width="1"/>
<path d="M491 278 L507 293 M507 278 L491 293" stroke="#e8203a" stroke-width="4" stroke-linecap="round"/>
<circle cx="293" cy="492" r="11" fill="none" stroke="#3050d0" stroke-width="1.2"/><circle cx="293" cy="492" r="8" fill="none" stroke="#3050d0" stroke-width="1"/><circle cx="293" cy="491" r="3.5" fill="none" stroke="#d02020" stroke-width="1.2"/>
<g stroke="#222" stroke-width="2.6" stroke-linecap="round"><path d="M280.5 380 L287 386.5 M299.5 399.5 L306 406 M303 384 L297 390 M289 396 L283.5 402 M299 378.5 L296.5 385 M290 401 L287.5 407.5 M279 389.5 L285 391 M301 395 L307.5 396.5"/></g>
<g stroke="#f4f4f4" stroke-width="1.3" stroke-linecap="round"><path d="M280.5 380 L287 386.5 M299.5 399.5 L306 406 M303 384 L297 390 M289 396 L283.5 402 M299 378.5 L296.5 385 M290 401 L287.5 407.5 M279 389.5 L285 391 M301 395 L307.5 396.5"/></g>
<circle cx="293" cy="393" r="4.5" fill="#f0f0f0" stroke="#555" stroke-width="0.8"/>
<path d="M422.5 409 H426 L433 403.5 V422.5 L426 417 H422.5 Z" fill="#f4f4f4" stroke="#333" stroke-width="1"/>
</svg>
<div style="position:absolute;left:720px;top:95px;width:123px;height:21px;background:linear-gradient(#c8c8c8,#b8b8b8);border:1px solid #727272;border-bottom:none;border-radius:4px 4px 0 0;"></div>
<svg style="position:absolute;left:732px;top:99px" width="13" height="13" viewBox="0 0 13 13"><path d="M11.5 3 A5.5 5.5 0 1 0 11.5 10 L7 6.5 Z" fill="#333"/></svg>
<div class="t" style="left:749.50px;top:105.60px;font-size:13.75px;font-weight:normal;color:#000;"><span class="ts" style="transform:scaleX(1.0360);">Game</span></div>
<div style="position:absolute;left:1353px;top:109px;width:0;height:0;border-left:3px solid transparent;border-right:3px solid transparent;border-top:4px solid #333"></div>
<div style="position:absolute;left:1360px;top:107.0px;width:10px;height:1.3px;background:#333"></div>
<div style="position:absolute;left:1360px;top:109.8px;width:10px;height:1.3px;background:#333"></div>
<div style="position:absolute;left:1360px;top:112.6px;width:10px;height:1.3px;background:#333"></div>
<div style="position:absolute;left:716px;top:95px;width:4px;height:569px;background:#7e7e7e"></div>
<div style="position:absolute;left:720px;top:115.5px;width:654px;height:21.5px;background:linear-gradient(#c0c0c0,#a8a8a8);border-top:1px solid #d0d0d0;"></div>
<div style="position:absolute;left:727.6px;top:116.5px;width:1px;height:20.5px;background:#7c7c7c"></div>
<div style="position:absolute;left:827.3px;top:116.5px;width:1px;height:20.5px;background:#7c7c7c"></div>
<div style="position:absolute;left:834.5px;top:116.5px;width:1px;height:20.5px;background:#7c7c7c"></div>
<div style="position:absolute;left:1034.5px;top:116.5px;width:1px;height:20.5px;background:#7c7c7c"></div>
<div style="position:absolute;left:1165.8px;top:116.5px;width:1px;height:20.5px;background:#7c7c7c"></div>
<div style="position:absolute;left:1279.4px;top:116.5px;width:1px;height:20.5px;background:#7c7c7c"></div>
<div style="position:absolute;left:1354.5px;top:116.5px;width:1px;height:20.5px;background:#7c7c7c"></div>
<div style="position:absolute;left:828.3px;top:116.5px;width:6.2px;height:20.5px;background:linear-gradient(#a9a9a9,#999)"></div>
<div class="t" style="left:734.40px;top:126.10px;font-size:11.25px;font-weight:normal;color:#000;"><span class="ts" style="transform:scaleX(1.1149);">Display 1</span></div>
<div style="position:absolute;left:817.5px;top:121.5px;width:0;height:0;border-left:3px solid transparent;border-right:3px solid transparent;border-bottom:3.5px solid #333"></div>
<div style="position:absolute;left:817.5px;top:126.5px;width:0;height:0;border-left:3px solid transparent;border-right:3px solid transparent;border-top:3.5px solid #333"></div>
<div class="t" style="left:842.60px;top:126.10px;font-size:11.25px;font-weight:normal;color:#000;"><span class="ts" style="transform:scaleX(1.1321);">16:9</span></div>
<div style="position:absolute;left:1024.5px;top:121.5px;width:0;height:0;border-left:3px solid transparent;border-right:3px solid transparent;border-bottom:3.5px solid #333"></div>
<div style="position:absolute;left:1024.5px;top:126.5px;width:0;height:0;border-left:3px solid transparent;border-right:3px solid transparent;border-top:3.5px solid #333"></div>
<div class="t" style="left:1042.40px;top:128.10px;font-size:11.25px;font-weight:normal;color:#000;"><span class="ts" style="transform:scaleX(1.0619);">Scale</span></div>
<div style="position:absolute;left:1082px;top:124.5px;width:36px;height:5px;background:linear-gradient(#8a8a8a,#a8a8a8);border-radius:3px;border:1px solid #808080"></div>
<div style="position:absolute;left:1079.5px;top:120px;width:11.5px;height:13px;background:radial-gradient(circle at 40% 35%,#e6e6e6,#a8a8a8);border:1px solid #666;border-radius:50%"></div>
<div class="t" style="left:1125.00px;top:128.10px;font-size:11.25px;font-weight:normal;color:#000;"><span class="ts" style="transform:scaleX(1.0933);">1x</span></div>
<div class="t" style="left:1173.60px;top:126.10px;font-size:11.25px;font-weight:normal;color:#000;"><span class="ts" style="transform:scaleX(1.0998);">Maximize On Play</span></div>
<div class="t" style="left:1286.00px;top:126.10px;font-size:11.25px;font-weight:normal;color:#000;"><span class="ts" style="transform:scaleX(1.1013);">Mute Audio</span></div>
<div class="t" style="left:1361.40px;top:126.10px;font-size:11.25px;font-weight:normal;color:#000;"><span class="ts" style="transform:scaleX(1.0902);">St</span></div>
<div style="position:absolute;left:1373px;top:95px;width:5px;height:630px;background:#7e7e7e"></div>
<div style="position:absolute;left:721px;top:137px;width:652px;height:527px;background:#313131;border:1px solid #9a9a9a;border-top:none;box-shadow:inset 5px 5px 7px rgba(0,0,0,0.3)"></div>
<div style="position:absolute;left:721px;top:216.5px;width:652px;height:367.2px;background:#000"></div>
<svg style="position:absolute;left:790.00px;top:255.00px;" width="520.00" height="310.00" viewBox="790 255 520 310" font-family="Liberation Sans, sans-serif"><path d="M796.5 277.3 L821.7 258.8 L989.5 260.6 L994 264.5 L999.5 261 L1307.6 265.3 L1304.5 562.4 L1131 557.5 L1128 553 L1124 557.3 L792 561 Z" fill="#e3e2df"/>
<ellipse cx="1235" cy="285" rx="28" ry="14" fill="#000" opacity="0.025"/>
<ellipse cx="1000" cy="325" rx="35" ry="12" fill="#000" opacity="0.015"/>
<ellipse cx="1280" cy="440" rx="14" ry="25" fill="#000" opacity="0.02"/>
<ellipse cx="1230" cy="540" rx="30" ry="10" fill="#000" opacity="0.015"/>
<ellipse cx="905" cy="470" rx="40" ry="18" fill="#000" opacity="0.012"/>
<ellipse cx="1110" cy="300" rx="20" ry="12" fill="#000" opacity="0.02"/>
<ellipse cx="960" cy="530" rx="30" ry="14" fill="#000" opacity="0.012"/>
<path d="M796.5 277.3 L823.5 277 L828 284 L802 284 Z" fill="#000" opacity="0.07"/>
<path d="M823.5 277 L821.7 258.8 L828 262 L829 280 Z" fill="#000" opacity="0.08"/>
<path d="M796.5 277.3 L821.7 258.8 L823.5 277 Z" fill="#ececea"/>
<path d="M806.9 285.8 L825.4 281.1 L847.5 298 L871.6 278.2 L885.8 284.4 L868.3 324.7 L859.1 323.7 L861.7 306.2 L852.1 314.1 L842.9 314.5 L830 305.9 L832.7 319.8 L822.1 324.4 Z" fill="#e02127"/>
<path d="M846.2 292 C841.5 292 840.5 287 841.5 284 C840 281 841 277 843 275.5 C843 278 844.5 279 845.5 280 C844.5 276 846 272 848.5 270.3 C847.5 273 849 274.5 850 276 C850.2 274.5 851 273.5 851.5 273.3 C851 276 852 279 851.3 283 C852 288 850 292 846.2 292 Z" fill="#e02127"/>
<circle cx="839.3" cy="318.1" r="2.9" fill="#e02127"/><circle cx="851.8" cy="318.4" r="2.9" fill="#e02127"/>
<text x="889.6" y="308.3" font-size="9.6" fill="#333" textLength="115" lengthAdjust="spacingAndGlyphs">Malebolge Corporation Ltd.</text>
<text x="889.6" y="320.4" font-size="9.6" fill="#333" textLength="107" lengthAdjust="spacingAndGlyphs">Infernal Abyss St.  No. 666</text>
<path d="M846.5 348.5 H1290.8 Q1294.8 348.5 1294.8 352.5 V548 Q1294.8 552 1290.8 552 H846.5 Q842.5 552 842.5 548 V352.5 Q842.5 348.5 846.5 348.5 Z" fill="none" stroke="#d9403f" stroke-width="1.1"/>
<path d="M843.5 362.4 H820 Q816 362.4 816 366.4 V543.3 Q816 547.3 820 547.3 H843.5" fill="none" stroke="#d9403f" stroke-width="1.1"/>
<path d="M842.5 361.7 H1294.8 M816 401.6 H1294.8 M816 450.8 H1294.8 M816 500.8 H1294.8 M957.3 348.5 V552 M1069 348.5 V552 M1180.5 348.5 V552" stroke="#d9403f" stroke-width="1" fill="none"/>
<text x="896" y="358.4" font-size="7.4" font-weight="bold" fill="#e0342f" text-anchor="middle" textLength="38" lengthAdjust="spacingAndGlyphs">DELIVERY 1</text>
<text x="1013" y="358.4" font-size="7.4" font-weight="bold" fill="#e0342f" text-anchor="middle" textLength="38" lengthAdjust="spacingAndGlyphs">DELIVERY 2</text>
<text x="1124" y="358.4" font-size="7.4" font-weight="bold" fill="#e0342f" text-anchor="middle" textLength="38" lengthAdjust="spacingAndGlyphs">DELIVERY 3</text>
<text x="1237" y="358.4" font-size="7.4" font-weight="bold" fill="#e0342f" text-anchor="middle" textLength="38" lengthAdjust="spacingAndGlyphs">DELIVERY 4</text>
<text x="830" y="371.6" font-size="5.2" font-weight="bold" fill="#e0342f" text-anchor="middle">SHELF</text>
<text x="830" y="382.7" font-size="9" font-weight="bold" fill="#e0342f" text-anchor="middle">01</text>
<text x="830" y="411.6" font-size="5.2" font-weight="bold" fill="#e0342f" text-anchor="middle">SHELF</text>
<text x="830" y="423.8" font-size="9" font-weight="bold" fill="#e0342f" text-anchor="middle">02</text>
<text x="830" y="459.7" font-size="5.2" font-weight="bold" fill="#e0342f" text-anchor="middle">SHELF</text>
<text x="830" y="475" font-size="9" font-weight="bold" fill="#e0342f" text-anchor="middle">03</text>
<text x="830" y="511" font-size="5.2" font-weight="bold" fill="#e0342f" text-anchor="middle">SHELF</text>
<text x="830" y="525.9" font-size="9" font-weight="bold" fill="#e0342f" text-anchor="middle">04</text>
<text x="896" y="368.8" font-size="4.6" fill="#2a2a2a" text-anchor="middle" textLength="66.2" lengthAdjust="spacingAndGlyphs"><tspan font-weight="bold" fill="#111">CONTENT:</tspan> BBQ PROTON PISTOL.</text>
<text x="896" y="378.5" font-size="4.6" fill="#2a2a2a" text-anchor="middle" textLength="66.2" lengthAdjust="spacingAndGlyphs"><tspan font-weight="bold" fill="#111">SENDER:</tspan> &quot;ACME&quot; CORPORATION.</text>
<text x="896" y="388" font-size="4.6" fill="#2a2a2a" text-anchor="middle" textLength="80.9" lengthAdjust="spacingAndGlyphs"><tspan font-weight="bold" fill="#111">ADDRESSEE:</tspan> MARTIAN MOTHER VESSEL.</text>
<text x="896" y="397.7" font-size="4.6" fill="#2a2a2a" text-anchor="middle" textLength="71.1" lengthAdjust="spacingAndGlyphs"><tspan font-weight="bold" fill="#111">ADDRESS:</tspan> MARS, IMPERIAL CITY.</text>
<text x="896" y="408.4" font-size="4.6" fill="#2a2a2a" text-anchor="middle" textLength="78.4" lengthAdjust="spacingAndGlyphs"><tspan font-weight="bold" fill="#111">CONTENT:</tspan> BEAR TRAP FOR VEHICLES.</text>
<text x="896" y="418.7" font-size="4.6" fill="#2a2a2a" text-anchor="middle" textLength="95.6" lengthAdjust="spacingAndGlyphs"><tspan font-weight="bold" fill="#111">SENDER:</tspan> &quot;GOLDILOCKS&quot; HUNTER'S EMPORIUM.</text>
<text x="896" y="429.2" font-size="4.6" fill="#2a2a2a" text-anchor="middle" textLength="93.1" lengthAdjust="spacingAndGlyphs"><tspan font-weight="bold" fill="#111">ADDRESSEE:</tspan> MR. TROLL UNDER THE BRIDGE.</text>
<text x="896" y="439" font-size="4.6" fill="#2a2a2a" text-anchor="middle" textLength="88.2" lengthAdjust="spacingAndGlyphs"><tspan font-weight="bold" fill="#111">ADDRESS:</tspan> ROCKFIELD BRIDGE, ROUTE 66,</text>
<text x="896" y="445.4" font-size="4.6" fill="#2a2a2a" text-anchor="middle" textLength="51.5" lengthAdjust="spacingAndGlyphs">OROGRANDE CALIFORNIA.</text>
<text x="896" y="457.5" font-size="4.6" fill="#2a2a2a" text-anchor="middle" textLength="63.7" lengthAdjust="spacingAndGlyphs"><tspan font-weight="bold" fill="#111">CONTENT:</tspan> PACK OF INHALERS.</text>
<text x="896" y="467" font-size="4.6" fill="#2a2a2a" text-anchor="middle" textLength="76.0" lengthAdjust="spacingAndGlyphs"><tspan font-weight="bold" fill="#111">SENDER:</tspan> &quot;JEKYLL&quot; PHARMACEUTICS.</text>
<text x="896" y="476.5" font-size="4.6" fill="#2a2a2a" text-anchor="middle" textLength="58.8" lengthAdjust="spacingAndGlyphs"><tspan font-weight="bold" fill="#111">ADDRESSEE:</tspan> DARTH BOTHER.</text>
<text x="896" y="487.5" font-size="4.6" fill="#2a2a2a" text-anchor="middle" textLength="71.1" lengthAdjust="spacingAndGlyphs"><tspan font-weight="bold" fill="#111">ADDRESS:</tspan> &quot;SUDDEN DEATH STAR&quot;,</text>
<text x="896" y="494" font-size="4.6" fill="#2a2a2a" text-anchor="middle" textLength="39.2" lengthAdjust="spacingAndGlyphs">GALAXY FAR AWAY.</text>
<text x="896" y="511.5" font-size="4.6" fill="#2a2a2a" text-anchor="middle" textLength="88.2" lengthAdjust="spacingAndGlyphs"><tspan font-weight="bold" fill="#111">CONTENT:</tspan> CHRISTMAS BASKET CONTAINING</text>
<text x="896" y="516.5" font-size="4.6" fill="#2a2a2a" text-anchor="middle" textLength="58.8" lengthAdjust="spacingAndGlyphs">LIVER PATE AND RED WINE.</text>
<text x="896" y="525.5" font-size="4.6" fill="#2a2a2a" text-anchor="middle" textLength="58.8" lengthAdjust="spacingAndGlyphs"><tspan font-weight="bold" fill="#111">SENDER:</tspan> JACK THE RIPPER.</text>
<text x="896" y="534.5" font-size="4.6" fill="#2a2a2a" text-anchor="middle" textLength="71.1" lengthAdjust="spacingAndGlyphs"><tspan font-weight="bold" fill="#111">ADDRESSEE:</tspan> DR. ANIMAL LECTER.</text>
<text x="896" y="543.5" font-size="4.6" fill="#2a2a2a" text-anchor="middle" textLength="83.3" lengthAdjust="spacingAndGlyphs"><tspan font-weight="bold" fill="#111">ADDRESS:</tspan> BALTIMORE STATE HOSPITAL.</text>
<text x="1013" y="367.5" font-size="4.6" fill="#2a2a2a" text-anchor="middle" textLength="76.0" lengthAdjust="spacingAndGlyphs"><tspan font-weight="bold" fill="#111">CONTENT:</tspan> BAG WITH SILVER COINS.</text>
<text x="1013" y="377" font-size="4.6" fill="#2a2a2a" text-anchor="middle" textLength="44.1" lengthAdjust="spacingAndGlyphs"><tspan font-weight="bold" fill="#111">SENDER:</tspan> BLUEBEARD.</text>
<text x="1013" y="387.5" font-size="4.6" fill="#2a2a2a" text-anchor="middle" textLength="63.7" lengthAdjust="spacingAndGlyphs"><tspan font-weight="bold" fill="#111">ADDRESSEE:</tspan> JUDAS ISCARIOT.</text>
<text x="1013" y="396.5" font-size="4.6" fill="#2a2a2a" text-anchor="middle" textLength="61.3" lengthAdjust="spacingAndGlyphs"><tspan font-weight="bold" fill="#111">ADDRESS:</tspan> MOUNT OF OLIVES.</text>
<text x="1013" y="411" font-size="4.6" fill="#2a2a2a" text-anchor="middle" textLength="112.7" lengthAdjust="spacingAndGlyphs"><tspan font-weight="bold" fill="#111">CONTENT:</tspan> CASE OF BALL PENS WITH LASER POINTER.</text>
<text x="1013" y="422" font-size="4.6" fill="#2a2a2a" text-anchor="middle" textLength="83.3" lengthAdjust="spacingAndGlyphs"><tspan font-weight="bold" fill="#111">SENDER:</tspan> &quot;ORIGAMI&quot; STATIONERY SHOP.</text>
<text x="1013" y="433" font-size="4.6" fill="#2a2a2a" text-anchor="middle" textLength="61.3" lengthAdjust="spacingAndGlyphs"><tspan font-weight="bold" fill="#111">ADDRESSEE:</tspan> THE ARCHITECT.</text>
<text x="1013" y="444" font-size="4.6" fill="#2a2a2a" text-anchor="middle" textLength="73.5" lengthAdjust="spacingAndGlyphs"><tspan font-weight="bold" fill="#111">ADDRESS:</tspan> THE &quot;PATRIX&quot; NETWORK.</text>
<text x="1013" y="459.5" font-size="4.6" fill="#2a2a2a" text-anchor="middle" textLength="49.0" lengthAdjust="spacingAndGlyphs"><tspan font-weight="bold" fill="#111">CONTENT:</tspan> HAIR TONIC.</text>
<text x="1013" y="470" font-size="4.6" fill="#2a2a2a" text-anchor="middle" textLength="63.7" lengthAdjust="spacingAndGlyphs"><tspan font-weight="bold" fill="#111">SENDER:</tspan> &quot;L'COREALE&quot; PARIS.</text>
<text x="1013" y="481" font-size="4.6" fill="#2a2a2a" text-anchor="middle" textLength="58.8" lengthAdjust="spacingAndGlyphs"><tspan font-weight="bold" fill="#111">ADDRESSEE:</tspan> FLEX FLUTHOR.</text>
<text x="1013" y="492" font-size="4.6" fill="#2a2a2a" text-anchor="middle" textLength="88.2" lengthAdjust="spacingAndGlyphs"><tspan font-weight="bold" fill="#111">ADDRESS:</tspan> METROPOLIS, BIG SKYSCRAPER.</text>
<text x="1013" y="508" font-size="4.6" fill="#2a2a2a" text-anchor="middle" textLength="85.8" lengthAdjust="spacingAndGlyphs"><tspan font-weight="bold" fill="#111">CONTENT:</tspan> REJUVENATING FACIAL CREAM.</text>
<text x="1013" y="518" font-size="4.6" fill="#2a2a2a" text-anchor="middle" textLength="61.3" lengthAdjust="spacingAndGlyphs"><tspan font-weight="bold" fill="#111">SENDER:</tspan> &quot;SHEGARE BEAUTY&quot;.</text>
<text x="1013" y="529.5" font-size="4.6" fill="#2a2a2a" text-anchor="middle" textLength="44.1" lengthAdjust="spacingAndGlyphs"><tspan font-weight="bold" fill="#111">ADDRESSEE:</tspan> FREDDY.</text>
<text x="1013" y="541" font-size="4.6" fill="#2a2a2a" text-anchor="middle" textLength="76.0" lengthAdjust="spacingAndGlyphs"><tspan font-weight="bold" fill="#111">ADDRESS:</tspan> YOUR WORST NIGHTMARES.</text>
<text x="1123" y="370.2" font-size="4.6" fill="#2a2a2a" text-anchor="middle" textLength="98.0" lengthAdjust="spacingAndGlyphs"><tspan font-weight="bold" fill="#111">CONTENT:</tspan> SIAMESE CAT (FELIX PRETENTIUS).</text>
<text x="1123" y="379.3" font-size="4.6" fill="#2a2a2a" text-anchor="middle" textLength="83.3" lengthAdjust="spacingAndGlyphs"><tspan font-weight="bold" fill="#111">SENDER:</tspan> &quot;TWELVE MONKEYS&quot; PET SHOP.</text>
<text x="1123" y="388" font-size="4.6" fill="#2a2a2a" text-anchor="middle" textLength="56.4" lengthAdjust="spacingAndGlyphs"><tspan font-weight="bold" fill="#111">ADDRESSEE:</tspan> DOCTOR EVIL.</text>
<text x="1123" y="396.6" font-size="4.6" fill="#2a2a2a" text-anchor="middle" textLength="49.0" lengthAdjust="spacingAndGlyphs"><tspan font-weight="bold" fill="#111">ADDRESS:</tspan> SECRET LAB.</text>
<text x="1123" y="423.3" font-size="5.2" fill="#2a2a2a" text-anchor="middle" textLength="24.8" lengthAdjust="spacingAndGlyphs">THERE ARE</text>
<text x="1123" y="430.3" font-size="5.2" fill="#2a2a2a" text-anchor="middle" textLength="52.2" lengthAdjust="spacingAndGlyphs">NO MORE DELIVERIES.</text>
<text x="1123" y="457" font-size="4.6" fill="#2a2a2a" text-anchor="middle" textLength="112.7" lengthAdjust="spacingAndGlyphs"><tspan font-weight="bold" fill="#111">CONTENT:</tspan> MUSIC VINYL: &quot;I'M A LITTLE TEAPOT AND</text>
<text x="1123" y="463.5" font-size="4.6" fill="#2a2a2a" text-anchor="middle" textLength="76.0" lengthAdjust="spacingAndGlyphs">OTHER FAMOUS CHILDREN'S SONGS&quot;.</text>
<text x="1123" y="473.5" font-size="4.6" fill="#2a2a2a" text-anchor="middle" textLength="66.2" lengthAdjust="spacingAndGlyphs"><tspan font-weight="bold" fill="#111">SENDER:</tspan> &quot;LOLLIPOP&quot; RECORDS.</text>
<text x="1123" y="483.5" font-size="4.6" fill="#2a2a2a" text-anchor="middle" textLength="53.9" lengthAdjust="spacingAndGlyphs"><tspan font-weight="bold" fill="#111">ADDRESSEE:</tspan> THE JESTER.</text>
<text x="1123" y="494" font-size="4.6" fill="#2a2a2a" text-anchor="middle" textLength="90.7" lengthAdjust="spacingAndGlyphs"><tspan font-weight="bold" fill="#111">ADDRESS:</tspan> PARKHAM ASYLUM, GOTHAM CITY.</text>
<text x="1123" y="507.5" font-size="4.6" fill="#2a2a2a" text-anchor="middle" textLength="105.4" lengthAdjust="spacingAndGlyphs"><tspan font-weight="bold" fill="#111">CONTENT:</tspan> USELESS BOOKS AND BORING TREATIES.</text>
<text x="1123" y="517.5" font-size="4.6" fill="#2a2a2a" text-anchor="middle" textLength="56.4" lengthAdjust="spacingAndGlyphs"><tspan font-weight="bold" fill="#111">SENDER:</tspan> UNITED NATIONS.</text>
<text x="1123" y="528.5" font-size="4.6" fill="#2a2a2a" text-anchor="middle" textLength="76.0" lengthAdjust="spacingAndGlyphs"><tspan font-weight="bold" fill="#111">ADDRESSEE:</tspan> &quot;BURTONS&quot; CREMATORY.</text>
<text x="1123" y="541" font-size="4.6" fill="#2a2a2a" text-anchor="middle" textLength="93.1" lengthAdjust="spacingAndGlyphs"><tspan font-weight="bold" fill="#111">ADDRESS:</tspan> HAVENING SWORD ALLEY, LONDON.</text>
<text x="1237" y="368.5" font-size="4.6" fill="#2a2a2a" text-anchor="middle" textLength="58.8" lengthAdjust="spacingAndGlyphs"><tspan font-weight="bold" fill="#111">CONTENT:</tspan> POISONED APPLE.</text>
<text x="1237" y="378.5" font-size="4.6" fill="#2a2a2a" text-anchor="middle" textLength="76.0" lengthAdjust="spacingAndGlyphs"><tspan font-weight="bold" fill="#111">SENDER:</tspan> &quot;MISS IVY&quot; FRUIT STORE.</text>
<text x="1237" y="387.3" font-size="4.6" fill="#2a2a2a" text-anchor="middle" textLength="63.7" lengthAdjust="spacingAndGlyphs"><tspan font-weight="bold" fill="#111">ADDRESSEE:</tspan> THE EVIL QUEEN.</text>
<text x="1237" y="395.5" font-size="4.6" fill="#2a2a2a" text-anchor="middle" textLength="85.8" lengthAdjust="spacingAndGlyphs"><tspan font-weight="bold" fill="#111">ADDRESS:</tspan> C/1A SOUTH WILLAMAN DRIVE,</text>
<text x="1237" y="401.2" font-size="4.6" fill="#2a2a2a" text-anchor="middle" textLength="44.1" lengthAdjust="spacingAndGlyphs">BEVERLY HILLS, CA.</text>
<text x="1237" y="424" font-size="5.2" fill="#2a2a2a" text-anchor="middle" textLength="24.8" lengthAdjust="spacingAndGlyphs">THERE ARE</text>
<text x="1237" y="431" font-size="5.2" fill="#2a2a2a" text-anchor="middle" textLength="52.2" lengthAdjust="spacingAndGlyphs">NO MORE DELIVERIES.</text>
<text x="1237" y="473.5" font-size="5.2" fill="#2a2a2a" text-anchor="middle" textLength="24.8" lengthAdjust="spacingAndGlyphs">THERE ARE</text>
<text x="1237" y="481.5" font-size="5.2" fill="#2a2a2a" text-anchor="middle" textLength="52.2" lengthAdjust="spacingAndGlyphs">NO MORE DELIVERIES.</text>
<text x="1237" y="524" font-size="5.2" fill="#2a2a2a" text-anchor="middle" textLength="24.8" lengthAdjust="spacingAndGlyphs">THERE ARE</text>
<text x="1237" y="532" font-size="5.2" fill="#2a2a2a" text-anchor="middle" textLength="52.2" lengthAdjust="spacingAndGlyphs">NO MORE DELIVERIES.</text></svg>
<svg style="position:absolute;left:0;top:0;width:1920px;height:1030px;pointer-events:none" viewBox="0 0 1920 1030"><g transform="translate(767.7,248.2) scale(0.157)"><path d="M0 -112 C17 -112 29 -94 29 -64 V-29 H64 C94 -29 109 -16 109 0 C109 16 94 30 64 30 H29 V66 C29 91 17 108 0 108 C-17 108 -30 91 -30 66 V30 H-65 C-95 30 -110 16 -110 0 C-110 -16 -95 -29 -65 -29 H-30 V-64 C-30 -94 -17 -112 0 -112 Z" fill="#f5b91e"/><path d="M-4 -107 H4 L11 -11 L101 -6 V6 L11 11 L4 104 H-4 L-11 11 L-100 6 V-6 L-11 -11 Z" fill="#d27a16"/></g><g transform="translate(767.7,285.7) scale(0.157,0.157)"><path d="M-110 0 C-110 -16 -95 -29 -65 -29 H64 C94 -29 109 -16 109 0 C109 16 94 30 64 30 H-65 C-95 30 -110 16 -110 0 Z" fill="#f5b91e"/><path d="M-100 -6 H101 V6 H-100 Z" fill="#d27a16"/></g></svg>
<svg style="position:absolute;left:1318px;top:230px" width="40" height="38" viewBox="1318 230 40 38">
<path d="M1326 238 L1349.5 259.5 M1349.5 238 L1326 259.5" stroke="#e8203a" stroke-width="5" stroke-linecap="round"/></svg>
<div style="position:absolute;left:1377px;top:95px;width:123px;height:21px;background:linear-gradient(#c8c8c8,#b8b8b8);border:1px solid #727272;border-bottom:none;border-radius:4px 4px 0 0;"></div>
<svg style="position:absolute;left:1387px;top:100px" width="14" height="14" viewBox="0 0 14 14"><circle cx="7" cy="7" r="6.5" fill="#2a2a2a"/><rect x="5.8" y="6" width="2.4" height="5" fill="#ddd"/><circle cx="7" cy="3.8" r="1.3" fill="#ddd"/></svg>
<div class="t" style="left:1406.50px;top:105.60px;font-size:13.75px;font-weight:normal;color:#000;"><span class="ts" style="transform:scaleX(1.1757);">Inspector</span></div>
<svg style="position:absolute;left:1879px;top:101px" width="12" height="13" viewBox="0 0 12 13"><path d="M3.2 2.2 A3 3 0 0 1 9 3.5 V6" stroke="#333" stroke-width="1.6" fill="none"/><rect x="1" y="6" width="10" height="7" fill="#333"/></svg>
<div style="position:absolute;left:1897px;top:108px;width:0;height:0;border-left:3px solid transparent;border-right:3px solid transparent;border-top:4px solid #333"></div>
<div style="position:absolute;left:1904px;top:106.0px;width:10px;height:1.3px;background:#333"></div>
<div style="position:absolute;left:1904px;top:108.8px;width:10px;height:1.3px;background:#333"></div>
<div style="position:absolute;left:1904px;top:111.6px;width:10px;height:1.3px;background:#333"></div>
<div style="position:absolute;left:1374px;top:116px;width:4px;height:603px;background:#808080"></div>
<div style="position:absolute;left:1376px;top:116px;width:1px;height:603px;background:#6a6a6a"></div>
<div style="position:absolute;left:1377px;top:116px;width:524px;height:603px;background:#A0A0A0"></div>
<div style="position:absolute;left:1377px;top:116px;width:524px;height:84px;background:linear-gradient(#aaaaaa,#b6b6b6)"></div>
<div style="position:absolute;left:1901px;top:116px;width:19px;height:603px;background:linear-gradient(90deg,#a8a8a8,#c4c4c4 50%,#a8a8a8);border-left:1px solid #888"></div>
<div style="position:absolute;left:1906px;top:122px;width:0;height:0;border-left:5px solid transparent;border-right:5px solid transparent;border-bottom:7px solid #333"></div>
<div style="position:absolute;left:1906px;top:703px;width:0;height:0;border-left:5px solid transparent;border-right:5px solid transparent;border-top:7px solid #333"></div>
<div style="position:absolute;left:1902px;top:137px;width:16.5px;height:331px;background:linear-gradient(90deg,#6c7e9c,#8496b2 25%,#62749a 60%,#4c5c7c);border:1px solid #46557a;border-radius:8px"></div>
<svg style="position:absolute;left:1384px;top:123px" width="32" height="32" viewBox="0 0 32 32">
<path d="M4 8 L15 3 L28 7 L28 20 L17 27 L4 22 Z" fill="#3f8fc8"/><path d="M4 8 L15 3 L28 7 L17 12 Z" fill="#8cc8ee"/><path d="M17 12 L28 7 L28 20 L17 27 Z" fill="#2a6aa8"/>
<path d="M2 24 L10 24 L6 28.5 Z" fill="#222"/></svg>
<div style="position:absolute;left:1430.6px;top:126.2px;width:14.5px;height:14.5px;background:linear-gradient(#8da2c8,#6c84b0);border:1px solid #555;border-radius:2px"></div>
<svg style="position:absolute;left:1430.6px;top:123.2px" width="16" height="18" viewBox="0 0 16 18"><path d="M3 9.5 L6.5 14 L14 2.5" stroke="#000" stroke-width="2.4" fill="none"/></svg>
<div style="position:absolute;left:1453px;top:124px;width:356px;height:20px;background:#a9a9a9;border:1px solid #8a8a8a;border-top-color:#6e6e6e;"></div>
<div class="t" style="left:1457.80px;top:133.60px;font-size:13.75px;font-weight:normal;color:#000;"><span class="ts" style="transform:scaleX(1.1036);">ZoomUp</span></div>
<div style="position:absolute;left:1815.4px;top:126.4px;width:14.5px;height:14.5px;background:linear-gradient(#c8c8c8,#b0b0b0);border:1px solid #777;border-radius:2px"></div>
<div class="t" style="left:1836.60px;top:133.60px;font-size:13.75px;font-weight:normal;color:#000;"><span class="ts" style="transform:scaleX(1.1166);">Static</span></div>
<div style="position:absolute;left:1882px;top:131px;width:0;height:0;border-left:5.5px solid transparent;border-right:5.5px solid transparent;border-top:5px solid #222"></div>
<div class="t" style="left:1422.30px;top:157.60px;font-size:13.75px;font-weight:normal;color:#000;"><span class="ts" style="transform:scaleX(1.1276);">Tag</span></div>
<div style="position:absolute;left:1453px;top:149.9px;width:200.4px;height:17.5px;background:linear-gradient(#d0d0d0,#b4b4b4);border:1px solid #7a7a7a;border-radius:3px;"></div>
<div class="t" style="left:1461.70px;top:157.10px;font-size:11.25px;font-weight:normal;color:#000;"><span class="ts" style="transform:scaleX(1.0718);">Untagged</span></div>
<div style="position:absolute;left:1642.5px;top:154.5px;width:0;height:0;border-left:2.5px solid transparent;border-right:2.5px solid transparent;border-bottom:3.5px solid #222"></div>
<div style="position:absolute;left:1642.5px;top:159.5px;width:0;height:0;border-left:2.5px solid transparent;border-right:2.5px solid transparent;border-top:3.5px solid #222"></div>
<div class="t" style="left:1662.20px;top:157.60px;font-size:13.75px;font-weight:normal;color:#000;"><span class="ts" style="transform:scaleX(1.0928);">Layer</span></div>
<div style="position:absolute;left:1707.4px;top:149.4px;width:186.4px;height:17.8px;background:linear-gradient(#d0d0d0,#b4b4b4);border:1px solid #7a7a7a;border-radius:3px;"></div>
<div class="t" style="left:1715.00px;top:157.10px;font-size:11.25px;font-weight:normal;color:#000;"><span class="ts" style="transform:scaleX(1.1111);">UI</span></div>
<div style="position:absolute;left:1882px;top:154.5px;width:0;height:0;border-left:2.5px solid transparent;border-right:2.5px solid transparent;border-bottom:3.5px solid #222"></div>
<div style="position:absolute;left:1882px;top:159.5px;width:0;height:0;border-left:2.5px solid transparent;border-right:2.5px solid transparent;border-top:3.5px solid #222"></div>
<div class="t" style="left:1402.20px;top:181.60px;font-size:13.75px;font-weight:normal;color:#6b6f5a;"><span class="ts" style="transform:scaleX(1.0613);">Prefab</span></div>
<div style="position:absolute;left:1453.5px;top:173.5px;width:297px;height:17px;background:linear-gradient(#c0c0c0,#b0b0b0);border:1px solid #909090;border-radius:3px"></div>
<div style="position:absolute;left:1600.2px;top:174px;width:1px;height:16px;background:#8a8a8a"></div>
<div style="position:absolute;left:1750px;top:173.5px;width:143.8px;height:17px;background:linear-gradient(#d0d0d0,#b4b4b4);border:1px solid #7a7a7a;border-radius:3px;"></div>
<div class="t" style="left:1510.40px;top:183.10px;font-size:11.25px;font-weight:normal;color:#666;"><span class="ts" style="transform:scaleX(1.1125);">Select</span></div>
<div class="t" style="left:1657.50px;top:183.10px;font-size:11.25px;font-weight:normal;color:#666;"><span class="ts" style="transform:scaleX(1.1346);">Revert</span></div>
<div class="t" style="left:1807.70px;top:183.10px;font-size:11.25px;font-weight:normal;color:#000;"><span class="ts" style="transform:scaleX(1.0868);">Apply</span></div>
<div style="position:absolute;left:1377px;top:199px;width:524px;height:2px;background:#858585"></div>
<div style="position:absolute;left:1383px;top:208px;width:0;height:0;border-left:5px solid transparent;border-right:5px solid transparent;border-top:9px solid #5a5a5a"></div>
<svg style="position:absolute;left:1395px;top:202px" width="22" height="22" viewBox="0 0 22 22" fill="none" stroke="#777" stroke-width="1.2">
<path d="M2.5 3.5 L8.5 2.5 L6.5 8.5 Z M19.5 3.5 L13.5 2.5 L15.5 8.5 Z M2.5 18.5 L8.5 19.5 L6.5 13.5 Z M19.5 18.5 L13.5 19.5 L15.5 13.5 Z" stroke-linejoin="round"/></svg>
<div class="t" style="left:1439.50px;top:213.60px;font-size:13.75px;font-weight:bold;color:#000;"><span class="ts" style="transform:scaleX(1.1787);">Rect Transform</span></div>
<div style="position:absolute;left:1837px;top:205px;width:15.5px;height:13.5px;background:linear-gradient(#6b8fc8,#3e62a0);border-radius:2px;border:1px solid #2f4f80"></div>
<div style="position:absolute;left:1841px;top:206px;font:bold 10px Liberation Sans;color:#c8d8f0;line-height:12px">?</div>
<svg style="position:absolute;left:1860px;top:205px" width="15" height="14" viewBox="0 0 15 14"><path d="M1 4 H9 M1 10 H5 M11 10 H14" stroke="#222" stroke-width="2"/><path d="M10 1 V7 M7 7 V13" stroke="#222" stroke-width="2.4"/></svg>
<svg style="position:absolute;left:1881px;top:204px" width="18" height="16" viewBox="0 0 18 16"><circle cx="7.5" cy="7.5" r="3.6" fill="none" stroke="#222" stroke-width="2.8"/><circle cx="7.5" cy="7.5" r="5.6" fill="none" stroke="#222" stroke-width="2.4" stroke-dasharray="2.2 2.2"/><path d="M13 12 H17 L15 15 Z" fill="#222"/></svg>
<div class="t" style="left:1409.70px;top:233.10px;font-size:11.25px;font-weight:normal;color:#000;"><span class="ts" style="transform:scaleX(1.1253);">center</span></div>
<div class="t" style="left:1392px;top:272px;font-size:11.25px;transform:rotate(-90deg);transform-origin:0 0"><span class="ts" style="transform:translate(-18px,-4px) scaleX(1.12)">middle</span></div>
<div style="position:absolute;left:1396.5px;top:242.6px;width:61.2px;height:59.8px;background:#ababab;border:1px solid #8c8c8c"></div>
<div style="position:absolute;left:1405px;top:251px;width:44px;height:43px;background:#a5a5a5;border:1px solid #8c8c8c;border-bottom-color:#6a6a6a"></div>
<div style="position:absolute;left:1427px;top:251.5px;width:1.6px;height:42px;background:#d03a3a"></div>
<div style="position:absolute;left:1405.5px;top:272px;width:43px;height:1.2px;background:#d03a3a"></div>
<div style="position:absolute;left:1416.5px;top:262px;width:21px;height:20.5px;border:1.6px solid #333"></div>
<div style="position:absolute;left:1416.5px;top:280.5px;width:21px;height:2.2px;background:#222"></div>
<div style="position:absolute;left:1425.6px;top:270.8px;width:4px;height:4px;background:#8a6a10;border-radius:50%"></div>
<div class="t" style="left:1582.40px;top:231.60px;font-size:13.75px;font-weight:normal;color:#000;"><span class="ts" style="transform:scaleX(1.0521);">Pos X</span></div>
<div class="t" style="left:1688.00px;top:231.60px;font-size:13.75px;font-weight:normal;color:#000;"><span class="ts" style="transform:scaleX(1.0593);">Pos Y</span></div>
<div class="t" style="left:1794.70px;top:231.60px;font-size:13.75px;font-weight:normal;color:#000;"><span class="ts" style="transform:scaleX(1.0746);">Pos Z</span></div>
<div style="position:absolute;left:1579px;top:243.4px;width:103px;height:18.900000000000006px;background:#a9a9a9;border:1px solid #8a8a8a;border-top-color:#6e6e6e;"></div>
<div class="t" style="left:1583.50px;top:252.60px;font-size:13.75px;font-weight:normal;color:#000;"><span class="ts" style="transform:scaleX(1.2114);">-357.24</span></div>
<div style="position:absolute;left:1685px;top:243.4px;width:104.29999999999995px;height:18.900000000000006px;background:#a9a9a9;border:1px solid #8a8a8a;border-top-color:#6e6e6e;"></div>
<div class="t" style="left:1689.60px;top:252.60px;font-size:13.75px;font-weight:normal;color:#000;"><span class="ts" style="transform:scaleX(1.1673);">193.55</span></div>
<div style="position:absolute;left:1792.2px;top:243.4px;width:102.79999999999995px;height:18.900000000000006px;background:#a9a9a9;border:1px solid #8a8a8a;border-top-color:#6e6e6e;"></div>
<div class="t" style="left:1796.70px;top:252.60px;font-size:13.75px;font-weight:normal;color:#000;"><span class="ts" style="transform:scaleX(0.8882);">0</span></div>
<div class="t" style="left:1583.00px;top:272.60px;font-size:13.75px;font-weight:normal;color:#000;"><span class="ts" style="transform:scaleX(1.1548);">Width</span></div>
<div class="t" style="left:1688.00px;top:272.60px;font-size:13.75px;font-weight:normal;color:#000;"><span class="ts" style="transform:scaleX(1.1296);">Height</span></div>
<div style="position:absolute;left:1579px;top:283.5px;width:103px;height:18.899999999999977px;background:#a9a9a9;border:1px solid #8a8a8a;border-top-color:#6e6e6e;"></div>
<div class="t" style="left:1583.50px;top:292.60px;font-size:13.75px;font-weight:normal;color:#000;"><span class="ts" style="transform:scaleX(1.0787);">51</span></div>
<div style="position:absolute;left:1685px;top:283.5px;width:104.29999999999995px;height:18.899999999999977px;background:#a9a9a9;border:1px solid #8a8a8a;border-top-color:#6e6e6e;"></div>
<div class="t" style="left:1689.60px;top:292.60px;font-size:13.75px;font-weight:normal;color:#000;"><span class="ts" style="transform:scaleX(1.0787);">52</span></div>
<div style="position:absolute;left:1831.6px;top:281.6px;width:63.4px;height:19.9px;background:linear-gradient(#d0d0d0,#b4b4b4);border:1px solid #7a7a7a;border-radius:3px;"></div>
<div style="position:absolute;left:1864.3px;top:282.6px;width:1px;height:18px;background:#7a7a7a"></div>
<div style="position:absolute;left:1841px;top:285.5px;width:14px;height:12px;border:1.3px dashed #555"></div>
<div class="t" style="left:1876.40px;top:292.10px;font-size:11.25px;font-weight:normal;color:#000;"><span class="ts" style="transform:scaleX(0.9969);">R</span></div>
<div style="position:absolute;left:1383px;top:311.5px;width:0;height:0;border-top:5px solid transparent;border-bottom:5px solid transparent;border-left:9px solid #5a5a5a"></div>
<div class="t" style="left:1396.80px;top:315.60px;font-size:13.75px;font-weight:normal;color:#000;"><span class="ts" style="transform:scaleX(1.1238);">Anchors</span></div>
<div class="t" style="left:1396.80px;top:337.60px;font-size:13.75px;font-weight:normal;color:#000;"><span class="ts" style="transform:scaleX(1.1184);">Pivot</span></div>
<div class="t" style="left:1582.60px;top:337.60px;font-size:13.75px;font-weight:normal;color:#000;"><span class="ts" style="transform:scaleX(0.9813);">X</span></div>
<div style="position:absolute;left:1595.4px;top:328.7px;width:86.59999999999991px;height:18.30000000000001px;background:#a9a9a9;border:1px solid #8a8a8a;border-top-color:#6e6e6e;"></div>
<div class="t" style="left:1598.60px;top:337.60px;font-size:13.75px;font-weight:normal;color:#000;"><span class="ts" style="transform:scaleX(1.2078);">0.5</span></div>
<div class="t" style="left:1688.00px;top:337.60px;font-size:13.75px;font-weight:normal;color:#000;"><span class="ts" style="transform:scaleX(0.9813);">Y</span></div>
<div style="position:absolute;left:1701.8px;top:328.7px;width:87.5px;height:18.30000000000001px;background:#a9a9a9;border:1px solid #8a8a8a;border-top-color:#6e6e6e;"></div>
<div class="t" style="left:1706.00px;top:337.60px;font-size:13.75px;font-weight:normal;color:#000;"><span class="ts" style="transform:scaleX(1.2078);">0.5</span></div>
<div class="t" style="left:1396.80px;top:370.60px;font-size:13.75px;font-weight:normal;color:#000;"><span class="ts" style="transform:scaleX(1.1695);">Rotation</span></div>
<div class="t" style="left:1582.60px;top:370.60px;font-size:13.75px;font-weight:normal;color:#000;"><span class="ts" style="transform:scaleX(0.9813);">X</span></div>
<div style="position:absolute;left:1595.4px;top:361.4px;width:86.59999999999991px;height:18.600000000000023px;background:#a9a9a9;border:1px solid #8a8a8a;border-top-color:#6e6e6e;"></div>
<div class="t" style="left:1598.60px;top:370.60px;font-size:13.75px;font-weight:normal;color:#000;"><span class="ts" style="transform:scaleX(0.9143);">0</span></div>
<div class="t" style="left:1688.00px;top:370.60px;font-size:13.75px;font-weight:normal;color:#000;"><span class="ts" style="transform:scaleX(0.9813);">Y</span></div>
<div style="position:absolute;left:1701.8px;top:361.4px;width:87.5px;height:18.600000000000023px;background:#a9a9a9;border:1px solid #8a8a8a;border-top-color:#6e6e6e;"></div>
<div class="t" style="left:1706.00px;top:370.60px;font-size:13.75px;font-weight:normal;color:#000;"><span class="ts" style="transform:scaleX(0.9143);">0</span></div>
<div class="t" style="left:1795.40px;top:370.60px;font-size:13.75px;font-weight:normal;color:#000;"><span class="ts" style="transform:scaleX(1.0706);">Z</span></div>
<div style="position:absolute;left:1808.2px;top:361.4px;width:86.79999999999995px;height:18.600000000000023px;background:#a9a9a9;border:1px solid #8a8a8a;border-top-color:#6e6e6e;"></div>
<div class="t" style="left:1812.00px;top:370.60px;font-size:13.75px;font-weight:normal;color:#000;"><span class="ts" style="transform:scaleX(0.9143);">0</span></div>
<div class="t" style="left:1396.80px;top:392.60px;font-size:13.75px;font-weight:normal;color:#000;"><span class="ts" style="transform:scaleX(1.0434);">Scale</span></div>
<div class="t" style="left:1582.60px;top:392.60px;font-size:13.75px;font-weight:normal;color:#000;"><span class="ts" style="transform:scaleX(0.9813);">X</span></div>
<div style="position:absolute;left:1595.4px;top:383.2px;width:86.59999999999991px;height:18.600000000000023px;background:#a9a9a9;border:1px solid #8a8a8a;border-top-color:#6e6e6e;"></div>
<div class="t" style="left:1598.60px;top:391.60px;font-size:13.75px;font-weight:normal;color:#000;"><span class="ts" style="transform:scaleX(0.9143);">1</span></div>
<div class="t" style="left:1688.00px;top:392.60px;font-size:13.75px;font-weight:normal;color:#000;"><span class="ts" style="transform:scaleX(0.9813);">Y</span></div>
<div style="position:absolute;left:1701.8px;top:383.2px;width:87.5px;height:18.600000000000023px;background:#a9a9a9;border:1px solid #8a8a8a;border-top-color:#6e6e6e;"></div>
<div class="t" style="left:1706.00px;top:391.60px;font-size:13.75px;font-weight:normal;color:#000;"><span class="ts" style="transform:scaleX(0.9143);">1</span></div>
<div class="t" style="left:1795.40px;top:392.60px;font-size:13.75px;font-weight:normal;color:#000;"><span class="ts" style="transform:scaleX(1.0706);">Z</span></div>
<div style="position:absolute;left:1808.2px;top:383.2px;width:86.79999999999995px;height:18.600000000000023px;background:#a9a9a9;border:1px solid #8a8a8a;border-top-color:#6e6e6e;"></div>
<div class="t" style="left:1812.00px;top:391.60px;font-size:13.75px;font-weight:normal;color:#000;"><span class="ts" style="transform:scaleX(0.9143);">1</span></div>
<div style="position:absolute;left:1377px;top:408.5px;width:524px;height:1px;background:#7c7c7c"></div>
<div style="position:absolute;left:1377px;top:409.5px;width:524px;height:1px;background:#b4b4b4"></div>
<div style="position:absolute;left:1383px;top:418px;width:0;height:0;border-left:5px solid transparent;border-right:5px solid transparent;border-top:9px solid #5a5a5a"></div>
<svg style="position:absolute;left:1396px;top:413px" width="20" height="16" viewBox="0 0 20 16"><circle cx="10" cy="8" r="7" fill="none" stroke="#7a7a7a" stroke-width="1.6"/><circle cx="10" cy="8" r="3.6" fill="none" stroke="#7a7a7a" stroke-width="1.6"/><circle cx="10" cy="8" r="1.4" fill="#7a7a7a"/></svg>
<div class="t" style="left:1439.00px;top:422.60px;font-size:13.75px;font-weight:bold;color:#000;"><span class="ts" style="transform:scaleX(1.1759);">Canvas Renderer</span></div>
<div style="position:absolute;left:1837px;top:414px;width:15.5px;height:13.5px;background:linear-gradient(#6b8fc8,#3e62a0);border-radius:2px;border:1px solid #2f4f80"></div>
<div style="position:absolute;left:1841px;top:415px;font:bold 10px Liberation Sans;color:#c8d8f0;line-height:12px">?</div>
<svg style="position:absolute;left:1860px;top:414px" width="15" height="14" viewBox="0 0 15 14"><path d="M1 4 H9 M1 10 H5 M11 10 H14" stroke="#222" stroke-width="2"/><path d="M10 1 V7 M7 7 V13" stroke="#222" stroke-width="2.4"/></svg>
<svg style="position:absolute;left:1881px;top:413px" width="18" height="16" viewBox="0 0 18 16"><circle cx="7.5" cy="7.5" r="3.6" fill="none" stroke="#222" stroke-width="2.8"/><circle cx="7.5" cy="7.5" r="5.6" fill="none" stroke="#222" stroke-width="2.4" stroke-dasharray="2.2 2.2"/><path d="M13 12 H17 L15 15 Z" fill="#222"/></svg>
<div class="t" style="left:1397.00px;top:441.60px;font-size:13.75px;font-weight:normal;color:#000;"><span class="ts" style="transform:scaleX(1.1263);">Cull Transparent Mesh</span></div>
<div style="position:absolute;left:1581.7px;top:434px;width:14.5px;height:14.5px;background:linear-gradient(#c8c8c8,#b0b0b0);border:1px solid #777;border-radius:2px"></div>
<div style="position:absolute;left:1377px;top:457px;width:524px;height:1px;background:#7c7c7c"></div>
<div style="position:absolute;left:1377px;top:458px;width:524px;height:1px;background:#b4b4b4"></div>
<div style="position:absolute;left:1383px;top:467px;width:0;height:0;border-left:5px solid transparent;border-right:5px solid transparent;border-top:9px solid #5a5a5a"></div>
<div style="position:absolute;left:1397px;top:463px;width:18px;height:16px;background:linear-gradient(135deg,#e8a030,#c07010);border:1px solid #a06010"></div>
<div style="position:absolute;left:1400px;top:466px;width:12px;height:10px;background:repeating-conic-gradient(#444 0 25%,#ddd 0 50%) 0 0/6px 5px"></div>
<div style="position:absolute;left:1420.5px;top:463px;width:14.5px;height:14.5px;background:linear-gradient(#8da2c8,#6c84b0);border:1px solid #555;border-radius:2px"></div>
<svg style="position:absolute;left:1420.5px;top:460px" width="16" height="18" viewBox="0 0 16 18"><path d="M3 9.5 L6.5 14 L14 2.5" stroke="#000" stroke-width="2.4" fill="none"/></svg>
<div class="t" style="left:1439.00px;top:470.60px;font-size:13.75px;font-weight:bold;color:#000;"><span class="ts" style="transform:scaleX(1.2586);">Image (Script)</span></div>
<div style="position:absolute;left:1837px;top:464px;width:15.5px;height:13.5px;background:linear-gradient(#6b8fc8,#3e62a0);border-radius:2px;border:1px solid #2f4f80"></div>
<div style="position:absolute;left:1841px;top:465px;font:bold 10px Liberation Sans;color:#c8d8f0;line-height:12px">?</div>
<svg style="position:absolute;left:1860px;top:464px" width="15" height="14" viewBox="0 0 15 14"><path d="M1 4 H9 M1 10 H5 M11 10 H14" stroke="#222" stroke-width="2"/><path d="M10 1 V7 M7 7 V13" stroke="#222" stroke-width="2.4"/></svg>
<svg style="position:absolute;left:1881px;top:463px" width="18" height="16" viewBox="0 0 18 16"><circle cx="7.5" cy="7.5" r="3.6" fill="none" stroke="#222" stroke-width="2.8"/><circle cx="7.5" cy="7.5" r="5.6" fill="none" stroke="#222" stroke-width="2.4" stroke-dasharray="2.2 2.2"/><path d="M13 12 H17 L15 15 Z" fill="#222"/></svg>
<div class="t" style="left:1397.60px;top:490.60px;font-size:13.75px;font-weight:normal;color:#000;"><span class="ts" style="transform:scaleX(1.1179);">Source Image</span></div>
<div style="position:absolute;left:1580px;top:481.1px;width:293.2px;height:19.3px;background:#a9a9a9;border:1px solid #8a8a8a;border-top-color:#6e6e6e;"></div>
<div style="position:absolute;left:1584px;top:483.5px;width:12px;height:12px;background:#b8c0c8;border:1.3px solid #5a7898"></div>
<div class="t" style="left:1599.30px;top:490.60px;font-size:13.75px;font-weight:normal;color:#000;"><span class="ts" style="transform:scaleX(1.2110);">Icono +</span></div>
<svg style="position:absolute;left:1881px;top:484px" width="14" height="14" viewBox="0 0 14 14"><circle cx="7" cy="7" r="5" fill="none" stroke="#333" stroke-width="1.3"/><circle cx="7" cy="7" r="1.3" fill="#333"/></svg>
<div class="t" style="left:1397.60px;top:512.60px;font-size:13.75px;font-weight:normal;color:#000;"><span class="ts" style="transform:scaleX(1.0956);">Color</span></div>
<div style="position:absolute;left:1580px;top:504.5px;width:293.2px;height:17.6px;background:#fff;border:1px solid #6a6a6a"></div>
<svg style="position:absolute;left:1877px;top:503px" width="20" height="20" viewBox="0 0 20 20"><path d="M3 17 L12 8 M10 6 L14 10" stroke="#333" stroke-width="1.4"/><path d="M12.5 4.5 L15.5 1.5 L18.5 4.5 L15.5 7.5 Z" fill="#333"/><path d="M2 18 L4 16" stroke="#333" stroke-width="1"/></svg>
<div class="t" style="left:1397.60px;top:535.60px;font-size:13.75px;font-weight:normal;color:#000;"><span class="ts" style="transform:scaleX(1.0673);">Material</span></div>
<div style="position:absolute;left:1580px;top:527px;width:293.2px;height:18.2px;background:#a9a9a9;border:1px solid #8a8a8a;border-top-color:#6e6e6e;"></div>
<div class="t" style="left:1584.00px;top:535.60px;font-size:13.75px;font-weight:normal;color:#000;"><span class="ts" style="transform:scaleX(1.1143);">None (Material)</span></div>
<svg style="position:absolute;left:1881px;top:529px" width="14" height="14" viewBox="0 0 14 14"><circle cx="7" cy="7" r="5" fill="none" stroke="#333" stroke-width="1.3"/><circle cx="7" cy="7" r="1.3" fill="#333"/></svg>
<div class="t" style="left:1397.60px;top:557.60px;font-size:13.75px;font-weight:normal;color:#000;"><span class="ts" style="transform:scaleX(1.1698);">Raycast Target</span></div>
<div style="position:absolute;left:1581.7px;top:550.5px;width:14.5px;height:14.5px;background:linear-gradient(#8da2c8,#6c84b0);border:1px solid #555;border-radius:2px"></div>
<svg style="position:absolute;left:1581.7px;top:547.5px" width="16" height="18" viewBox="0 0 16 18"><path d="M3 9.5 L6.5 14 L14 2.5" stroke="#000" stroke-width="2.4" fill="none"/></svg>
<div class="t" style="left:1397.60px;top:580.60px;font-size:13.75px;font-weight:normal;color:#000;"><span class="ts" style="transform:scaleX(1.1228);">Image Type</span></div>
<div style="position:absolute;left:1580px;top:571.8px;width:315.7px;height:16px;background:linear-gradient(#d0d0d0,#b4b4b4);border:1px solid #7a7a7a;border-radius:3px;"></div>
<div class="t" style="left:1588.00px;top:580.10px;font-size:11.25px;font-weight:normal;color:#000;"><span class="ts" style="transform:scaleX(1.1195);">Simple</span></div>
<div style="position:absolute;left:1885px;top:575px;width:0;height:0;border-left:2.5px solid transparent;border-right:2.5px solid transparent;border-bottom:3.5px solid #222"></div>
<div style="position:absolute;left:1885px;top:580px;width:0;height:0;border-left:2.5px solid transparent;border-right:2.5px solid transparent;border-top:3.5px solid #222"></div>
<div class="t" style="left:1415.00px;top:602.60px;font-size:13.75px;font-weight:normal;color:#000;"><span class="ts" style="transform:scaleX(1.1306);">Preserve Aspect</span></div>
<div style="position:absolute;left:1581.7px;top:595.3px;width:14.5px;height:14.5px;background:linear-gradient(#8da2c8,#6c84b0);border:1px solid #555;border-radius:2px"></div>
<svg style="position:absolute;left:1581.7px;top:592.3px" width="16" height="18" viewBox="0 0 16 18"><path d="M3 9.5 L6.5 14 L14 2.5" stroke="#000" stroke-width="2.4" fill="none"/></svg>
<div style="position:absolute;left:1589px;top:616.7px;width:306.7px;height:16.9px;background:linear-gradient(#d0d0d0,#b4b4b4);border:1px solid #7a7a7a;border-radius:3px;"></div>
<div class="t" style="left:1700.20px;top:625.10px;font-size:11.25px;font-weight:normal;color:#000;"><span class="ts" style="transform:scaleX(1.1245);">Set Native Size</span></div>
<div style="position:absolute;left:1377px;top:637.5px;width:524px;height:1px;background:#7c7c7c"></div>
<div style="position:absolute;left:1377px;top:638.5px;width:524px;height:1px;background:#b4b4b4"></div>
<div style="position:absolute;left:1383px;top:648px;width:0;height:0;border-left:5px solid transparent;border-right:5px solid transparent;border-top:9px solid #5a5a5a"></div>
<svg style="position:absolute;left:1396px;top:641px" width="20" height="20" viewBox="0 0 20 20"><circle cx="10" cy="10" r="8.5" fill="#bbb" stroke="#e0a030" stroke-width="1.6"/><text x="10" y="13.5" font-size="8" font-weight="bold" fill="#888" text-anchor="middle" font-family="Liberation Sans">OK</text></svg>
<div style="position:absolute;left:1420.5px;top:644px;width:14.5px;height:14.5px;background:linear-gradient(#8da2c8,#6c84b0);border:1px solid #555;border-radius:2px"></div>
<svg style="position:absolute;left:1420.5px;top:641px" width="16" height="18" viewBox="0 0 16 18"><path d="M3 9.5 L6.5 14 L14 2.5" stroke="#000" stroke-width="2.4" fill="none"/></svg>
<div class="t" style="left:1439.00px;top:652.60px;font-size:13.75px;font-weight:bold;color:#000;"><span class="ts" style="transform:scaleX(1.2324);">Button (Script)</span></div>
<div style="position:absolute;left:1837px;top:645px;width:15.5px;height:13.5px;background:linear-gradient(#6b8fc8,#3e62a0);border-radius:2px;border:1px solid #2f4f80"></div>
<div style="position:absolute;left:1841px;top:646px;font:bold 10px Liberation Sans;color:#c8d8f0;line-height:12px">?</div>
<svg style="position:absolute;left:1860px;top:645px" width="15" height="14" viewBox="0 0 15 14"><path d="M1 4 H9 M1 10 H5 M11 10 H14" stroke="#222" stroke-width="2"/><path d="M10 1 V7 M7 7 V13" stroke="#222" stroke-width="2.4"/></svg>
<svg style="position:absolute;left:1881px;top:644px" width="18" height="16" viewBox="0 0 18 16"><circle cx="7.5" cy="7.5" r="3.6" fill="none" stroke="#222" stroke-width="2.8"/><circle cx="7.5" cy="7.5" r="5.6" fill="none" stroke="#222" stroke-width="2.4" stroke-dasharray="2.2 2.2"/><path d="M13 12 H17 L15 15 Z" fill="#222"/></svg>
<div class="t" style="left:1397.60px;top:671.60px;font-size:13.75px;font-weight:normal;color:#000;"><span class="ts" style="transform:scaleX(1.1342);">Interactable</span></div>
<div style="position:absolute;left:1581.7px;top:664.5px;width:14.5px;height:14.5px;background:linear-gradient(#8da2c8,#6c84b0);border:1px solid #555;border-radius:2px"></div>
<svg style="position:absolute;left:1581.7px;top:661.5px" width="16" height="18" viewBox="0 0 16 18"><path d="M3 9.5 L6.5 14 L14 2.5" stroke="#000" stroke-width="2.4" fill="none"/></svg>
<div class="t" style="left:1397.60px;top:693.60px;font-size:13.75px;font-weight:normal;color:#000;"><span class="ts" style="transform:scaleX(1.1474);">Transition</span></div>
<div style="position:absolute;left:1580px;top:685px;width:315.7px;height:16.6px;background:linear-gradient(#d0d0d0,#b4b4b4);border:1px solid #7a7a7a;border-radius:3px;"></div>
<div class="t" style="left:1588.00px;top:694.10px;font-size:11.25px;font-weight:normal;color:#000;"><span class="ts" style="transform:scaleX(1.1629);">Color Tint</span></div>
<div style="position:absolute;left:1885px;top:689px;width:0;height:0;border-left:2.5px solid transparent;border-right:2.5px solid transparent;border-bottom:3.5px solid #222"></div>
<div style="position:absolute;left:1885px;top:694px;width:0;height:0;border-left:2.5px solid transparent;border-right:2.5px solid transparent;border-top:3.5px solid #222"></div>
<div class="t" style="left:1415.00px;top:715.60px;font-size:13.75px;font-weight:normal;color:#000;"><span class="ts" style="transform:scaleX(1.1532);">Target Graphic</span></div>
<div style="position:absolute;left:1580px;top:707.3px;width:293.2px;height:18px;background:#a9a9a9;border:1px solid #8a8a8a;border-top-color:#6e6e6e;"></div>
<div style="position:absolute;left:1584px;top:709.5px;width:12px;height:12px;background:linear-gradient(135deg,#e8a030,#c07010);border:1px solid #a06010"></div>
<div class="t" style="left:1599.30px;top:715.60px;font-size:13.75px;font-weight:normal;color:#000;"><span class="ts" style="transform:scaleX(1.0392);">ZoomUp (Image)</span></div>
<div style="position:absolute;left:1374px;top:719px;width:546px;height:284px;background:#808080"></div>
<div style="position:absolute;left:1378px;top:719.5px;width:542px;height:21.5px;background:linear-gradient(#5e5e5e,#3e3e3e);border-top:1px solid #8a8a8a"></div>
<div style="position:absolute;left:1382.5px;top:720px;width:1px;height:21px;background:#333"></div>
<div class="t" style="left:1387.80px;top:730.60px;font-size:13.75px;font-weight:normal;color:#d8d8d8;"><span class="ts" style="transform:scaleX(1.1947);">ZoomUp</span></div>
<div style="position:absolute;left:1459.5px;top:724px;width:0;height:0;border-left:2.5px solid transparent;border-right:2.5px solid transparent;border-bottom:3.5px solid #aaa"></div>
<div style="position:absolute;left:1459.5px;top:730px;width:0;height:0;border-left:2.5px solid transparent;border-right:2.5px solid transparent;border-top:3.5px solid #aaa"></div>
<div style="position:absolute;left:1468px;top:720px;width:1.5px;height:21px;background:#2e2e2e"></div>
<div style="position:absolute;left:1471.3px;top:726.5px;width:438.7px;height:1.5px;background:#9a9a9a"></div>
<div style="position:absolute;left:1471.3px;top:728px;width:438.7px;height:1px;background:#2a2a2a"></div>
<div style="position:absolute;left:1471.3px;top:731px;width:438.7px;height:1.5px;background:#9a9a9a"></div>
<div style="position:absolute;left:1471.3px;top:732.5px;width:438.7px;height:1px;background:#2a2a2a"></div>
<div style="position:absolute;left:1378px;top:741px;width:542px;height:262px;background:#232323;border-left:1px solid #777"></div>
<div style="position:absolute;left:0px;top:664px;width:950px;height:6px;background:#838383"></div>
<div style="position:absolute;left:0px;top:670px;width:123px;height:21px;background:linear-gradient(#c8c8c8,#b8b8b8);border:1px solid #727272;border-bottom:none;border-radius:4px 4px 0 0;"></div>
<svg style="position:absolute;left:10px;top:675px" width="15" height="12" viewBox="0 0 15 12"><path d="M0.5 1.5 H5.5 L7 3 H14.5 V11.5 H0.5 Z" fill="#6a6a6a" stroke="#555" stroke-width="0.8"/></svg>
<div class="t" style="left:28.80px;top:680.60px;font-size:13.75px;font-weight:normal;color:#000;"><span class="ts" style="transform:scaleX(1.1496);">Project</span></div>
<svg style="position:absolute;left:137px;top:672px" width="13" height="15" viewBox="0 0 13 15"><rect x="1" y="1" width="10.5" height="13" fill="#bbb" stroke="#555" stroke-width="1"/><path d="M3 4 H9.5 M3 6.5 H9.5 M3 9 H9.5 M3 11.5 H7" stroke="#666" stroke-width="0.9"/></svg>
<div class="t" style="left:154.25px;top:680.60px;font-size:13.75px;font-weight:normal;color:#2a2a2a;"><span class="ts" style="transform:scaleX(1.0951);">Console</span></div>
<svg style="position:absolute;left:263px;top:672px" width="12" height="15" viewBox="0 0 12 15"><circle cx="6" cy="8.5" r="5" fill="#ccc" stroke="#666" stroke-width="1"/><path d="M6 8.5 V3.5 A5 5 0 0 1 10.5 7 Z" fill="#d03030"/><rect x="4.5" y="1" width="3" height="2" fill="#666"/></svg>
<div class="t" style="left:278.75px;top:680.60px;font-size:13.75px;font-weight:normal;color:#2a2a2a;"><span class="ts" style="transform:scaleX(1.1019);">Profiler</span></div>
<svg style="position:absolute;left:910px;top:676px" width="12" height="13" viewBox="0 0 12 13"><path d="M3.2 2.2 A3 3 0 0 1 9 3.5 V6" stroke="#333" stroke-width="1.6" fill="none"/><rect x="1" y="6" width="10" height="7" fill="#333"/></svg>
<div style="position:absolute;left:929px;top:683px;width:0;height:0;border-left:3px solid transparent;border-right:3px solid transparent;border-top:4px solid #333"></div>
<div style="position:absolute;left:936px;top:681.0px;width:10px;height:1.3px;background:#333"></div>
<div style="position:absolute;left:936px;top:683.8px;width:10px;height:1.3px;background:#333"></div>
<div style="position:absolute;left:936px;top:686.6px;width:10px;height:1.3px;background:#333"></div>
<div style="position:absolute;left:0px;top:690.5px;width:950px;height:22px;background:linear-gradient(#c0c0c0,#a8a8a8);border-top:1px solid #d0d0d0;border-bottom:1px solid #8a8a8a"></div>
<div style="position:absolute;left:9px;top:691.5px;width:1px;height:20.5px;background:#7c7c7c"></div>
<div style="position:absolute;left:69px;top:691.5px;width:1px;height:20.5px;background:#7c7c7c"></div>
<div class="t" style="left:15.50px;top:702.10px;font-size:11.25px;font-weight:normal;color:#000;"><span class="ts" style="transform:scaleX(1.1175);">Create</span></div>
<div style="position:absolute;left:59px;top:699px;width:0;height:0;border-left:3px solid transparent;border-right:3px solid transparent;border-top:3.5px solid #333"></div>
<div style="position:absolute;left:471.7px;top:693px;width:373.7px;height:17.8px;background:linear-gradient(#a4a4a4,#b4b4b4);border:1px solid #6e6e6e;border-radius:9px;"></div>
<svg style="position:absolute;left:476px;top:695px" width="14" height="14" viewBox="0 0 14 14"><circle cx="6" cy="6" r="3.8" fill="none" stroke="#555" stroke-width="1.2"/><path d="M8.7 8.7 L11.5 11.5" stroke="#555" stroke-width="1.6"/></svg>
<div style="position:absolute;left:859.7px;top:691.5px;width:1px;height:20.5px;background:#7c7c7c"></div>
<div style="position:absolute;left:887px;top:691.5px;width:1px;height:20.5px;background:#7c7c7c"></div>
<div style="position:absolute;left:915px;top:691.5px;width:1px;height:20.5px;background:#7c7c7c"></div>
<div style="position:absolute;left:941.8px;top:691.5px;width:1px;height:20.5px;background:#7c7c7c"></div>
<svg style="position:absolute;left:864px;top:694px" width="18" height="16" viewBox="0 0 18 16"><path d="M1 14 L6 5 L10 14 Z" fill="#333"/><circle cx="11" cy="6" r="4" fill="#333"/><rect x="9" y="9" width="7" height="6" fill="#333"/></svg>
<svg style="position:absolute;left:892px;top:694px" width="18" height="16" viewBox="0 0 18 16"><path d="M1.5 2 H8 L16 10 L10 16 L1.5 8 Z" fill="#333"/><circle cx="5" cy="5.5" r="1.4" fill="#aaa"/></svg>
<svg style="position:absolute;left:920px;top:694px" width="16" height="16" viewBox="0 0 16 16"><path d="M8 1 L10.1 5.6 L15 6 L11.3 9.3 L12.4 14.2 L8 11.6 L3.6 14.2 L4.7 9.3 L1 6 L5.9 5.6 Z" fill="#7a7a7a"/></svg>
<div style="position:absolute;left:0px;top:712.5px;width:293.5px;height:291px;background:#A0A0A0;border-bottom:1px solid #7a7a7a"></div>
<div style="position:absolute;left:293.5px;top:712.5px;width:1px;height:291px;background:#7a7a7a"></div>
<div style="position:absolute;left:5px;top:721px;width:0;height:0;border-left:5px solid transparent;border-right:5px solid transparent;border-top:9px solid #5a5a5a"></div>
<svg style="position:absolute;left:20px;top:713px" width="20" height="20" viewBox="0 0 20 20"><path d="M10 1.5 L12.6 7 L18.5 7.6 L14 11.6 L15.4 17.5 L10 14.5 L4.6 17.5 L6 11.6 L1.5 7.6 L7.4 7 Z" fill="#e8c020" stroke="#a08010" stroke-width="0.8"/></svg>
<div class="t" style="left:43.00px;top:723.60px;font-size:13.75px;font-weight:bold;color:#000;"><span class="ts" style="transform:scaleX(1.1490);">Favorites</span></div>
<svg style="position:absolute;left:37px;top:734px" width="20" height="20" viewBox="0 0 20 20"><circle cx="8" cy="8" r="5.5" fill="none" stroke="#c8a818" stroke-width="2.2"/><path d="M12 12 L16 16" stroke="#c8a818" stroke-width="3" stroke-linecap="round"/></svg>
<div class="t" style="left:60.00px;top:743.60px;font-size:13.75px;font-weight:normal;color:#000;"><span class="ts" style="transform:scaleX(1.0774);">All Scenes</span></div>
<svg style="position:absolute;left:37px;top:754px" width="20" height="20" viewBox="0 0 20 20"><circle cx="8" cy="8" r="5.5" fill="none" stroke="#c8a818" stroke-width="2.2"/><path d="M12 12 L16 16" stroke="#c8a818" stroke-width="3" stroke-linecap="round"/></svg>
<div class="t" style="left:60.00px;top:763.60px;font-size:13.75px;font-weight:normal;color:#000;"><span class="ts" style="transform:scaleX(1.0816);">All Materials</span></div>
<svg style="position:absolute;left:37px;top:774.75px" width="20" height="20" viewBox="0 0 20 20"><circle cx="8" cy="8" r="5.5" fill="none" stroke="#c8a818" stroke-width="2.2"/><path d="M12 12 L16 16" stroke="#c8a818" stroke-width="3" stroke-linecap="round"/></svg>
<div class="t" style="left:60.00px;top:784.60px;font-size:13.75px;font-weight:normal;color:#000;"><span class="ts" style="transform:scaleX(1.0798);">All Models</span></div>
<svg style="position:absolute;left:37px;top:794px" width="20" height="20" viewBox="0 0 20 20"><circle cx="8" cy="8" r="5.5" fill="none" stroke="#c8a818" stroke-width="2.2"/><path d="M12 12 L16 16" stroke="#c8a818" stroke-width="3" stroke-linecap="round"/></svg>
<div class="t" style="left:60.00px;top:803.60px;font-size:13.75px;font-weight:normal;color:#000;"><span class="ts" style="transform:scaleX(1.0902);">All Prefabs</span></div>
<svg style="position:absolute;left:37px;top:814.25px" width="20" height="20" viewBox="0 0 20 20"><circle cx="8" cy="8" r="5.5" fill="none" stroke="#c8a818" stroke-width="2.2"/><path d="M12 12 L16 16" stroke="#c8a818" stroke-width="3" stroke-linecap="round"/></svg>
<div class="t" style="left:60.00px;top:823.60px;font-size:13.75px;font-weight:normal;color:#000;"><span class="ts" style="transform:scaleX(1.1370);">All Scripts</span></div>
<div style="position:absolute;left:6px;top:857px;width:0;height:0;border-top:5px solid transparent;border-bottom:5px solid transparent;border-left:9px solid #5a5a5a"></div>
<svg style="position:absolute;left:20px;top:853px" width="19" height="16" viewBox="0 0 19 16"><path d="M0.5 2 H6 L7.5 3.5 H18 V15.5 H0.5 Z" fill="#4e5a62"/><path d="M0.5 5 H18 V7 H0.5 Z" fill="#a8b0b4"/></svg>
<div class="t" style="left:43.75px;top:862.60px;font-size:13.75px;font-weight:bold;color:#000;"><span class="ts" style="transform:scaleX(1.0807);">Assets</span></div>
<div style="position:absolute;left:6px;top:877px;width:0;height:0;border-top:5px solid transparent;border-bottom:5px solid transparent;border-left:9px solid #5a5a5a"></div>
<svg style="position:absolute;left:20px;top:873px" width="19" height="16" viewBox="0 0 19 16"><path d="M0.5 2 H6 L7.5 3.5 H18 V15.5 H0.5 Z" fill="#4e5a62"/><path d="M0.5 5 H18 V7 H0.5 Z" fill="#a8b0b4"/></svg>
<div class="t" style="left:43.75px;top:882.60px;font-size:13.75px;font-weight:bold;color:#000;"><span class="ts" style="transform:scaleX(1.1111);">Packages</span></div>
<div style="position:absolute;left:294.5px;top:712.5px;width:655.5px;height:23px;background:#b2b2b2;border-bottom:1px solid #8e8e8e"></div>
<div class="t" style="left:301.75px;top:723.60px;font-size:13.75px;font-weight:normal;color:#333;"><span class="ts" style="transform:scaleX(1.1511);">Assets</span></div>
<div style="position:absolute;left:359px;top:722px;width:0;height:0;border-top:3px solid transparent;border-bottom:3px solid transparent;border-left:5px solid #666"></div>
<div class="t" style="left:372.50px;top:723.60px;font-size:13.75px;font-weight:bold;color:#000;"><span class="ts" style="transform:scaleX(1.1198);">Resources</span></div>
<div style="position:absolute;left:460px;top:722px;width:0;height:0;border-top:3px solid transparent;border-bottom:3px solid transparent;border-left:5px solid #666"></div>
<div style="position:absolute;left:294.5px;top:735.5px;width:655.5px;height:247px;background:#A0A0A0"></div>
<svg style="position:absolute;left:318px;top:757px" width="59" height="50" viewBox="0 0 60 50" preserveAspectRatio="none"><path d="M2 4 Q2 1 5 1 H19 L23 5 H57 Q59 5 59 7 V12 H2 Z" fill="#c4c4c4"/><path d="M1 10 Q1 8 3 8 H57 Q59 8 59 10 V46 Q59 49 56 49 H4 Q1 49 1 46 Z" fill="url(#fg)"/><defs><linearGradient id="fg" x1="0" y1="0" x2="0" y2="1"><stop offset="0" stop-color="#5e6a72"/><stop offset="1" stop-color="#3c464c"/></linearGradient></defs></svg>
<div class="t" style="left:319.50px;top:826.10px;font-size:11.25px;font-weight:normal;color:#000;"><span class="ts" style="transform:scaleX(1.0725);">AudioCli...</span></div>
<svg style="position:absolute;left:400px;top:757px" width="60" height="50" viewBox="0 0 60 50" preserveAspectRatio="none"><path d="M2 4 Q2 1 5 1 H19 L23 5 H57 Q59 5 59 7 V12 H2 Z" fill="#c4c4c4"/><path d="M1 10 Q1 8 3 8 H57 Q59 8 59 10 V46 Q59 49 56 49 H4 Q1 49 1 46 Z" fill="url(#fg)"/><defs><linearGradient id="fg" x1="0" y1="0" x2="0" y2="1"><stop offset="0" stop-color="#5e6a72"/><stop offset="1" stop-color="#3c464c"/></linearGradient></defs></svg>
<div class="t" style="left:401.25px;top:826.10px;font-size:11.25px;font-weight:normal;color:#000;"><span class="ts" style="transform:scaleX(1.0582);">Escenari...</span></div>
<svg style="position:absolute;left:483px;top:757px" width="59" height="50" viewBox="0 0 60 50" preserveAspectRatio="none"><path d="M2 4 Q2 1 5 1 H19 L23 5 H57 Q59 5 59 7 V12 H2 Z" fill="#c4c4c4"/><path d="M1 10 Q1 8 3 8 H57 Q59 8 59 10 V46 Q59 49 56 49 H4 Q1 49 1 46 Z" fill="url(#fg)"/><defs><linearGradient id="fg" x1="0" y1="0" x2="0" y2="1"><stop offset="0" stop-color="#5e6a72"/><stop offset="1" stop-color="#3c464c"/></linearGradient></defs></svg>
<div class="t" style="left:490.00px;top:826.10px;font-size:11.25px;font-weight:normal;color:#000;"><span class="ts" style="transform:scaleX(1.0749);">Fuentes</span></div>
<svg style="position:absolute;left:565px;top:757px" width="59.799999999999955" height="50" viewBox="0 0 60 50" preserveAspectRatio="none"><path d="M2 4 Q2 1 5 1 H19 L23 5 H57 Q59 5 59 7 V12 H2 Z" fill="#c4c4c4"/><path d="M1 10 Q1 8 3 8 H57 Q59 8 59 10 V46 Q59 49 56 49 H4 Q1 49 1 46 Z" fill="url(#fg)"/><defs><linearGradient id="fg" x1="0" y1="0" x2="0" y2="1"><stop offset="0" stop-color="#5e6a72"/><stop offset="1" stop-color="#3c464c"/></linearGradient></defs></svg>
<div class="t" style="left:576.40px;top:826.10px;font-size:11.25px;font-weight:normal;color:#000;"><span class="ts" style="transform:scaleX(1.0438);">Musica</span></div>
<svg style="position:absolute;left:648px;top:757px" width="58.89999999999998" height="50" viewBox="0 0 60 50" preserveAspectRatio="none"><path d="M2 4 Q2 1 5 1 H19 L23 5 H57 Q59 5 59 7 V12 H2 Z" fill="#c4c4c4"/><path d="M1 10 Q1 8 3 8 H57 Q59 8 59 10 V46 Q59 49 56 49 H4 Q1 49 1 46 Z" fill="url(#fg)"/><defs><linearGradient id="fg" x1="0" y1="0" x2="0" y2="1"><stop offset="0" stop-color="#5e6a72"/><stop offset="1" stop-color="#3c464c"/></linearGradient></defs></svg>
<div class="t" style="left:651.40px;top:826.10px;font-size:11.25px;font-weight:normal;color:#000;"><span class="ts" style="transform:scaleX(1.0789);">Reusable</span></div>
<svg style="position:absolute;left:730px;top:757px" width="60" height="50" viewBox="0 0 60 50" preserveAspectRatio="none"><path d="M2 4 Q2 1 5 1 H19 L23 5 H57 Q59 5 59 7 V12 H2 Z" fill="#c4c4c4"/><path d="M1 10 Q1 8 3 8 H57 Q59 8 59 10 V46 Q59 49 56 49 H4 Q1 49 1 46 Z" fill="url(#fg)"/><defs><linearGradient id="fg" x1="0" y1="0" x2="0" y2="1"><stop offset="0" stop-color="#5e6a72"/><stop offset="1" stop-color="#3c464c"/></linearGradient></defs></svg>
<div class="t" style="left:734.00px;top:826.10px;font-size:11.25px;font-weight:normal;color:#000;"><span class="ts" style="transform:scaleX(1.1686);">Textures</span></div>
<div style="position:absolute;left:294.5px;top:982.5px;width:655.5px;height:21px;background:#b2b2b2;border-top:1px solid #7a7a7a;border-bottom:1px solid #7a7a7a"></div>
<div style="position:absolute;left:860px;top:990.5px;width:68px;height:5px;background:linear-gradient(#7a7a7a,#a0a0a0);border-radius:3px"></div>
<div style="position:absolute;left:887px;top:986.5px;width:12px;height:12px;background:radial-gradient(circle at 40% 35%,#e6e6e6,#a8a8a8);border:1px solid #666;border-radius:50%"></div>
<div style="position:absolute;left:950px;top:664px;width:3px;height:340px;background:#7e7e7e"></div>
<div style="position:absolute;left:953px;top:670px;width:122.5px;height:21px;background:linear-gradient(#c8c8c8,#b8b8b8);border:1px solid #727272;border-bottom:none;border-radius:4px 4px 0 0;"></div>
<svg style="position:absolute;left:963px;top:674px" width="12" height="12" viewBox="0 0 12 12"><path d="M0.5 1 H2 M3.5 1 H11.5 M2 4.5 H3.5 M5 4.5 H11.5 M2 8 H3.5 M5 8 H11.5 M2 11 H3.5 M5 11 H11.5" stroke="#333" stroke-width="1.3"/></svg>
<div class="t" style="left:982.00px;top:680.60px;font-size:13.75px;font-weight:normal;color:#000;"><span class="ts" style="transform:scaleX(1.0927);">Hierarchy</span></div>
<svg style="position:absolute;left:1333px;top:676px" width="12" height="13" viewBox="0 0 12 13"><path d="M3.2 2.2 A3 3 0 0 1 9 3.5 V6" stroke="#333" stroke-width="1.6" fill="none"/><rect x="1" y="6" width="10" height="7" fill="#333"/></svg>
<div style="position:absolute;left:1352px;top:683px;width:0;height:0;border-left:3px solid transparent;border-right:3px solid transparent;border-top:4px solid #333"></div>
<div style="position:absolute;left:1359px;top:681.0px;width:10px;height:1.3px;background:#333"></div>
<div style="position:absolute;left:1359px;top:683.8px;width:10px;height:1.3px;background:#333"></div>
<div style="position:absolute;left:1359px;top:686.6px;width:10px;height:1.3px;background:#333"></div>
<div style="position:absolute;left:953px;top:690.5px;width:420px;height:22px;background:linear-gradient(#c0c0c0,#a8a8a8);border-top:1px solid #d0d0d0;border-bottom:1px solid #8a8a8a"></div>
<div style="position:absolute;left:961px;top:691.5px;width:1px;height:20.5px;background:#7c7c7c"></div>
<div style="position:absolute;left:1021.5px;top:691.5px;width:1px;height:20.5px;background:#7c7c7c"></div>
<div class="t" style="left:968.60px;top:701.10px;font-size:11.25px;font-weight:normal;color:#000;"><span class="ts" style="transform:scaleX(1.1190);">Create</span></div>
<div style="position:absolute;left:1011px;top:698.5px;width:0;height:0;border-left:3px solid transparent;border-right:3px solid transparent;border-top:3.5px solid #333"></div>
<div style="position:absolute;left:1031px;top:692.3px;width:325.5px;height:16.5px;background:linear-gradient(#a4a4a4,#b4b4b4);border:1px solid #6e6e6e;border-radius:9px;"></div>
<svg style="position:absolute;left:1035px;top:694px" width="16" height="13" viewBox="0 0 16 13"><circle cx="5" cy="5.5" r="3.6" fill="none" stroke="#555" stroke-width="1.2"/><path d="M7.5 8 L10 11" stroke="#555" stroke-width="1.5"/><path d="M9.5 3.5 H14.5 L12 6.5 Z" fill="#555"/></svg>
<div class="t" style="left:1052.00px;top:701.10px;font-size:11.25px;font-weight:normal;color:#5e5e5e;"><span class="ts" style="transform:scaleX(1.0147);">All</span></div>
<div style="position:absolute;left:953px;top:712.5px;width:420px;height:291px;background:#A0A0A0;border-bottom:1px solid #7a7a7a;border-left:1px solid #8a8a8a"></div>
<div style="position:absolute;left:954px;top:957px;width:400.3px;height:19.6px;background:#3162be"></div>
<div style="position:absolute;left:994px;top:721.7px;width:0;height:0;border-left:5px solid transparent;border-right:5px solid transparent;border-top:9px solid #5a5a5a"></div>
<div class="t" style="left:1008.70px;top:727.60px;font-size:13.75px;font-weight:normal;color:#111;"><span class="ts" style="transform:scaleX(0.9818);">UI</span></div>
<div style="position:absolute;left:1012px;top:741.9px;width:0;height:0;border-top:5px solid transparent;border-bottom:5px solid transparent;border-left:9px solid #5a5a5a"></div>
<div class="t" style="left:1026.10px;top:747.60px;font-size:13.75px;font-weight:normal;color:#111;"><span class="ts" style="transform:scaleX(1.0740);">HabArea</span></div>
<div style="position:absolute;left:1012px;top:762px;width:0;height:0;border-top:5px solid transparent;border-bottom:5px solid transparent;border-left:9px solid #5a5a5a"></div>
<div class="t" style="left:1026.10px;top:767.60px;font-size:13.75px;font-weight:normal;color:#111;"><span class="ts" style="transform:scaleX(1.0754);">Menu</span></div>
<div style="position:absolute;left:1012px;top:782.2px;width:0;height:0;border-left:5px solid transparent;border-right:5px solid transparent;border-top:9px solid #5a5a5a"></div>
<div class="t" style="left:1026.10px;top:787.60px;font-size:13.75px;font-weight:normal;color:#111;"><span class="ts" style="transform:scaleX(1.0732);">MaletinMenu</span></div>
<div class="t" style="left:1044.00px;top:808.60px;font-size:13.75px;font-weight:normal;color:#111;"><span class="ts" style="transform:scaleX(1.0928);">MenuFondo</span></div>
<div class="t" style="left:1044.00px;top:827.60px;font-size:13.75px;font-weight:normal;color:#111;"><span class="ts" style="transform:scaleX(1.1359);">Documents</span></div>
<div class="t" style="left:1044.00px;top:847.60px;font-size:13.75px;font-weight:normal;color:#111;"><span class="ts" style="transform:scaleX(1.0692);">FlechaDerecha</span></div>
<div class="t" style="left:1044.00px;top:866.60px;font-size:13.75px;font-weight:normal;color:#111;"><span class="ts" style="transform:scaleX(1.0997);">FlechaIzquierda</span></div>
<div style="position:absolute;left:1030px;top:881.5px;width:0;height:0;border-top:5px solid transparent;border-bottom:5px solid transparent;border-left:9px solid #5a5a5a"></div>
<div class="t" style="left:1044.00px;top:887.60px;font-size:13.75px;font-weight:normal;color:#111;"><span class="ts" style="transform:scaleX(1.1255);">Icons</span></div>
<div style="position:absolute;left:1030px;top:902.1px;width:0;height:0;border-top:5px solid transparent;border-bottom:5px solid transparent;border-left:9px solid #5a5a5a"></div>
<div class="t" style="left:1044.00px;top:907.60px;font-size:13.75px;font-weight:normal;color:#111;"><span class="ts" style="transform:scaleX(1.1152);">PrevisualizarDocumento</span></div>
<div style="position:absolute;left:1030px;top:921.4px;width:0;height:0;border-left:5px solid transparent;border-right:5px solid transparent;border-top:9px solid #5a5a5a"></div>
<div class="t" style="left:1044.00px;top:926.60px;font-size:13.75px;font-weight:normal;color:#111;"><span class="ts" style="transform:scaleX(1.1272);">VisorImagenes</span></div>
<div style="position:absolute;left:1048px;top:941.3px;width:0;height:0;border-top:5px solid transparent;border-bottom:5px solid transparent;border-left:9px solid #5a5a5a"></div>
<div class="t" style="left:1061.30px;top:946.60px;font-size:13.75px;font-weight:normal;color:#111;"><span class="ts" style="transform:scaleX(1.0933);">ScrollRect</span></div>
<div class="t" style="left:1061.30px;top:967.60px;font-size:13.75px;font-weight:normal;color:#fff;"><span class="ts" style="transform:scaleX(1.1169);">ZoomUp</span></div>
<div class="t" style="left:1061.30px;top:987.60px;font-size:13.75px;font-weight:normal;color:#111;"><span class="ts" style="transform:scaleX(1.1406);">ZoomDown</span></div>
<div style="position:absolute;left:1354.6px;top:713px;width:17.5px;height:290px;background:linear-gradient(90deg,#a4a4a4,#c0c0c0 50%,#a4a4a4)"></div>
<div style="position:absolute;left:1358px;top:720px;width:0;height:0;border-left:5px solid transparent;border-right:5px solid transparent;border-bottom:6.5px solid #333"></div>
<div style="position:absolute;left:1358px;top:989px;width:0;height:0;border-left:5px solid transparent;border-right:5px solid transparent;border-top:6.5px solid #333"></div>
<div style="position:absolute;left:1355.5px;top:734.5px;width:16px;height:246px;background:linear-gradient(90deg,#b8b8b8,#e0e0e0 50%,#b8b8b8);border:1px solid #888;border-radius:8px"></div>
<div style="position:absolute;left:1356px;top:762.4px;width:15.5px;height:130.2px;background:linear-gradient(90deg,#6c7e9c,#8496b2 25%,#62749a 60%,#4c5c7c);border:1px solid #46557a;border-radius:8px"></div>
<div style="position:absolute;left:1373px;top:664px;width:5px;height:340px;background:#7e7e7e"></div>
<div style="position:absolute;left:1523px;top:744px;width:250px;height:257px;background:repeating-conic-gradient(#a3a3a3 0 25%,#cbcbcb 0 50%) 25px 8px/40px 40px"></div>
<svg style="position:absolute;left:1523px;top:744px" width="250" height="257" viewBox="1523 744 250 257">
<defs><linearGradient id="cg" x1="0" y1="0" x2="0" y2="1"><stop offset="0" stop-color="#ffe650"/><stop offset="1" stop-color="#f0b020"/></linearGradient></defs>
<g opacity="0.35" transform="translate(0,15)"><path d="M1651 752 C1668 752 1680 770 1680 800 V835 H1715 C1745 835 1760 848 1760 864 C1760 880 1745 894 1715 894 H1680 V930 C1680 955 1668 972 1651 972 C1634 972 1621 955 1621 930 V894 H1586 C1556 894 1541 880 1541 864 C1541 848 1556 835 1586 835 H1621 V800 C1621 770 1634 752 1651 752 Z" fill="#000"/></g>
<path d="M1651 752 C1668 752 1680 770 1680 800 V835 H1715 C1745 835 1760 848 1760 864 C1760 880 1745 894 1715 894 H1680 V930 C1680 955 1668 972 1651 972 C1634 972 1621 955 1621 930 V894 H1586 C1556 894 1541 880 1541 864 C1541 848 1556 835 1586 835 H1621 V800 C1621 770 1634 752 1651 752 Z" fill="url(#cg)"/>
<path d="M1645 762 H1657 L1668 846 L1748 852 V876 L1668 882 L1657 965 H1645 L1634 882 L1553 876 V852 L1634 846 Z" fill="#f2a81c" opacity="0.8"/>
<path d="M1647 757 H1655 L1662 853 L1752 858 V870 L1662 875 L1655 968 H1647 L1640 875 L1551 870 V858 L1640 853 Z" fill="#d2761a"/>
</svg>
<div class="t" style="left:1615.00px;top:970.60px;font-size:13.75px;font-weight:bold;color:#fff;text-shadow:1px 1px 1px #000,0 0 2px #000"><span class="ts" style="transform:scaleX(1.1530);">ZoomUp</span></div>
<div class="t" style="left:1565.20px;top:987.60px;font-size:13.75px;font-weight:bold;color:#fff;text-shadow:1px 1px 1px #000,0 0 2px #000"><span class="ts" style="transform:scaleX(1.2487);">Image Size: 406x416</span></div>
<div style="position:absolute;left:1654.8px;top:1005.5px;width:230.2px;height:22px;background:#9c9c9c;border:1px solid #6e6e6e;border-left:2px solid #4a6ab0"></div>
<div class="t" style="left:1694.60px;top:1016.10px;font-size:11.25px;font-weight:normal;color:#000;"><span class="ts" style="transform:scaleX(1.1486);">Bake paused in play mode</span></div>
</body></html>
